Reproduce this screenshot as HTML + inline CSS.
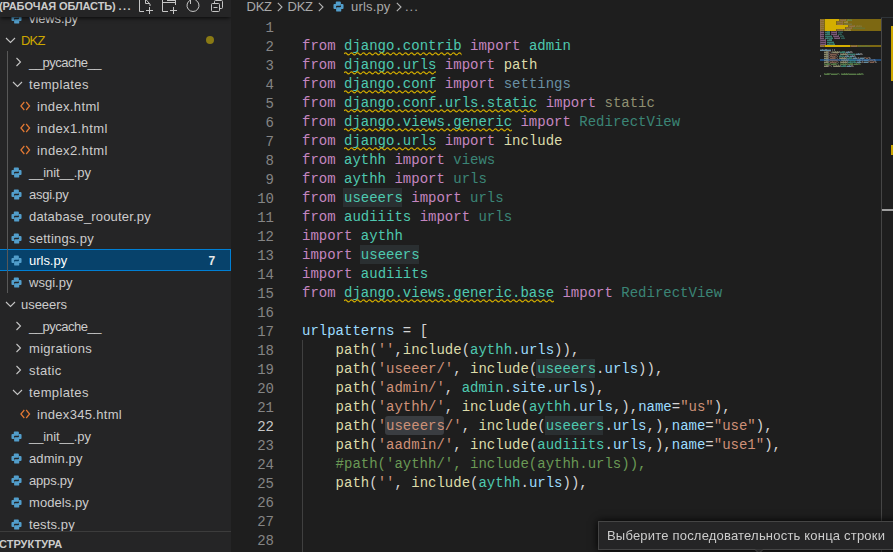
<!DOCTYPE html>
<html><head><meta charset="utf-8"><style>
*{margin:0;padding:0;box-sizing:border-box}
html,body{width:893px;height:552px;overflow:hidden;background:#1e1e1e}
body{position:relative;font-family:"Liberation Sans",sans-serif}
#sb{position:absolute;left:0;top:0;width:231px;height:552px;background:#252526;overflow:hidden}
.row{position:absolute;left:0;width:231px;height:22px;color:#cccccc;font-size:13px;letter-spacing:0.18px}
.row .t{position:absolute;top:1px;line-height:22px;white-space:nowrap}
.row .i{position:absolute;line-height:0}
.row.sel{left:-1px;width:232px;background:#07426b;border:1px solid #007fd4;color:#fff}
.row.sel .t{top:0px}
.row.sel .i{margin-top:-1px}
.badge{position:absolute;left:208.5px;top:0px;line-height:22px;font-weight:bold;font-size:12px;color:#e8e8e8}
.warn{color:#cca700}
.dot{position:absolute;left:206px;top:7px;width:8px;height:8px;border-radius:4px;background:#8a7a14}
#sbh{position:absolute;left:0;top:0;width:231px;height:17px;background:#252526;box-shadow:0 2px 4px -1px #000c;z-index:2}
#sbh .tt{position:absolute;left:-1px;top:-1px;font-weight:bold;font-size:11px;color:#cccccc;line-height:14px;white-space:nowrap}
.guide{position:absolute;width:1px;background:#585858}
#struct{position:absolute;left:0;top:531px;width:231px;height:21px;background:#252526;border-top:1px solid #3c3c3c;z-index:2}
#struct span{position:absolute;left:-1px;top:5px;font-weight:bold;font-size:11px;color:#cccccc;line-height:14px}
#bc{position:absolute;left:0;top:0;height:17px;width:893px;color:#a9a9a9;font-size:13px;letter-spacing:0.18px}
#bc span{position:absolute;top:-2px;line-height:17px;white-space:nowrap}
#bc svg{position:absolute}
.ln{position:absolute;left:240px;width:34px;text-align:right;font:14px/19px "Liberation Mono",monospace;color:#858585}
.ln.act{color:#c6c6c6}
.cl{position:absolute;left:302px;font:14px/19px "Liberation Mono",monospace;white-space:pre;color:#d4d4d4}
.hl{background:#2a2f31;box-shadow:0 -1px 0 #2a2f31, 0 1px 0 #2a2f31}
.hl2{background:#3a3d41;border-radius:3px;box-shadow:0 -1px 0 #3a3d41, 0 1px 0 #3a3d41}
#tip{position:absolute;left:598px;top:521px;width:300px;height:29px;background:#252526;border:1px solid #454545;color:#cccccc;font-size:13px;letter-spacing:0.2px;box-shadow:0 0 8px #000}
#tip span{will-change:transform;position:absolute;left:8px;top:5px;line-height:17px;white-space:nowrap}
#vs{position:absolute;left:881px;top:17px;width:1px;height:535px;background:#464646}
#vst{position:absolute;left:881px;top:17px;width:12px;height:1px;background:#2f3438}
</style></head><body>
<div id="sb">
<div class="guide" style="left:7px;top:51px;height:242px;z-index:1"></div>
<div class="row" style="top:7px"><span class="i" style="left:11px;top:6px"><svg width="11" height="11" viewBox="0 0 12 12"><path fill="#529ecb" d="M4 0.5H7.6Q8.6 0.5 8.6 1.5V4.3Q8.6 5.3 7.6 5.3H4.3Q3.3 5.3 3.3 6.3V8.6H1.5Q0.5 8.6 0.5 7.6V4.4Q0.5 3.4 1.5 3.4H3V1.5Q3 0.5 4 0.5Z"/><path fill="#529ecb" transform="rotate(180 6 6)" d="M4 0.5H7.6Q8.6 0.5 8.6 1.5V4.3Q8.6 5.3 7.6 5.3H4.3Q3.3 5.3 3.3 6.3V8.6H1.5Q0.5 8.6 0.5 7.6V4.4Q0.5 3.4 1.5 3.4H3V1.5Q3 0.5 4 0.5Z"/></svg></span><span class="t" style="left:29px;letter-spacing:-0.106px">views.py</span></div><div class="row" style="top:29px"><span class="i" style="left:5px;top:8px"><svg width="11" height="7" viewBox="0 0 11 7"><path d="M1 1l4.5 4.5L10 1" stroke="#c5c5c5" stroke-width="1.1" fill="none"/></svg></span><span class="t warn" style="left:21px;letter-spacing:-0.82px">DKZ</span><span class="dot"></span></div><div class="row" style="top:51px"><span class="i" style="left:15px;top:6px"><svg width="8" height="10" viewBox="0 0 8 10"><path d="M1.5 1l4 4-4 4" stroke="#c5c5c5" stroke-width="1.1" fill="none"/></svg></span><span class="t" style="left:29px;letter-spacing:-0.49px">__pycache__</span></div><div class="row" style="top:73px"><span class="i" style="left:12px;top:8px"><svg width="11" height="7" viewBox="0 0 11 7"><path d="M1 1l4.5 4.5L10 1" stroke="#c5c5c5" stroke-width="1.1" fill="none"/></svg></span><span class="t" style="left:29px;letter-spacing:0.392px">templates</span></div><div class="row" style="top:95px"><span class="i" style="left:20px;top:6px"><svg width="11" height="10" viewBox="0 0 11 10"><path d="M4.3 1L.9 5l3.4 4M6.2 1L9.6 5 6.2 9" stroke="#e37933" stroke-width="1.2" fill="none"/></svg></span><span class="t" style="left:37px;letter-spacing:0.358px">index.html</span></div><div class="row" style="top:117px"><span class="i" style="left:20px;top:6px"><svg width="11" height="10" viewBox="0 0 11 10"><path d="M4.3 1L.9 5l3.4 4M6.2 1L9.6 5 6.2 9" stroke="#e37933" stroke-width="1.2" fill="none"/></svg></span><span class="t" style="left:37px;letter-spacing:0.38px">index1.html</span></div><div class="row" style="top:139px"><span class="i" style="left:20px;top:6px"><svg width="11" height="10" viewBox="0 0 11 10"><path d="M4.3 1L.9 5l3.4 4M6.2 1L9.6 5 6.2 9" stroke="#e37933" stroke-width="1.2" fill="none"/></svg></span><span class="t" style="left:37px;letter-spacing:0.38px">index2.html</span></div><div class="row" style="top:161px"><span class="i" style="left:11px;top:6px"><svg width="11" height="11" viewBox="0 0 12 12"><path fill="#529ecb" d="M4 0.5H7.6Q8.6 0.5 8.6 1.5V4.3Q8.6 5.3 7.6 5.3H4.3Q3.3 5.3 3.3 6.3V8.6H1.5Q0.5 8.6 0.5 7.6V4.4Q0.5 3.4 1.5 3.4H3V1.5Q3 0.5 4 0.5Z"/><path fill="#529ecb" transform="rotate(180 6 6)" d="M4 0.5H7.6Q8.6 0.5 8.6 1.5V4.3Q8.6 5.3 7.6 5.3H4.3Q3.3 5.3 3.3 6.3V8.6H1.5Q0.5 8.6 0.5 7.6V4.4Q0.5 3.4 1.5 3.4H3V1.5Q3 0.5 4 0.5Z"/></svg></span><span class="t" style="left:29px;letter-spacing:-0.09px">__init__.py</span></div><div class="row" style="top:183px"><span class="i" style="left:11px;top:6px"><svg width="11" height="11" viewBox="0 0 12 12"><path fill="#529ecb" d="M4 0.5H7.6Q8.6 0.5 8.6 1.5V4.3Q8.6 5.3 7.6 5.3H4.3Q3.3 5.3 3.3 6.3V8.6H1.5Q0.5 8.6 0.5 7.6V4.4Q0.5 3.4 1.5 3.4H3V1.5Q3 0.5 4 0.5Z"/><path fill="#529ecb" transform="rotate(180 6 6)" d="M4 0.5H7.6Q8.6 0.5 8.6 1.5V4.3Q8.6 5.3 7.6 5.3H4.3Q3.3 5.3 3.3 6.3V8.6H1.5Q0.5 8.6 0.5 7.6V4.4Q0.5 3.4 1.5 3.4H3V1.5Q3 0.5 4 0.5Z"/></svg></span><span class="t" style="left:29px;letter-spacing:-0.253px">asgi.py</span></div><div class="row" style="top:205px"><span class="i" style="left:11px;top:6px"><svg width="11" height="11" viewBox="0 0 12 12"><path fill="#529ecb" d="M4 0.5H7.6Q8.6 0.5 8.6 1.5V4.3Q8.6 5.3 7.6 5.3H4.3Q3.3 5.3 3.3 6.3V8.6H1.5Q0.5 8.6 0.5 7.6V4.4Q0.5 3.4 1.5 3.4H3V1.5Q3 0.5 4 0.5Z"/><path fill="#529ecb" transform="rotate(180 6 6)" d="M4 0.5H7.6Q8.6 0.5 8.6 1.5V4.3Q8.6 5.3 7.6 5.3H4.3Q3.3 5.3 3.3 6.3V8.6H1.5Q0.5 8.6 0.5 7.6V4.4Q0.5 3.4 1.5 3.4H3V1.5Q3 0.5 4 0.5Z"/></svg></span><span class="t" style="left:29px;letter-spacing:0.174px">database_roouter.py</span></div><div class="row" style="top:227px"><span class="i" style="left:11px;top:6px"><svg width="11" height="11" viewBox="0 0 12 12"><path fill="#529ecb" d="M4 0.5H7.6Q8.6 0.5 8.6 1.5V4.3Q8.6 5.3 7.6 5.3H4.3Q3.3 5.3 3.3 6.3V8.6H1.5Q0.5 8.6 0.5 7.6V4.4Q0.5 3.4 1.5 3.4H3V1.5Q3 0.5 4 0.5Z"/><path fill="#529ecb" transform="rotate(180 6 6)" d="M4 0.5H7.6Q8.6 0.5 8.6 1.5V4.3Q8.6 5.3 7.6 5.3H4.3Q3.3 5.3 3.3 6.3V8.6H1.5Q0.5 8.6 0.5 7.6V4.4Q0.5 3.4 1.5 3.4H3V1.5Q3 0.5 4 0.5Z"/></svg></span><span class="t" style="left:29px;letter-spacing:0.25px">settings.py</span></div><div class="row sel" style="top:249px"><span class="i" style="left:11px;top:6px"><svg width="11" height="11" viewBox="0 0 12 12"><path fill="#529ecb" d="M4 0.5H7.6Q8.6 0.5 8.6 1.5V4.3Q8.6 5.3 7.6 5.3H4.3Q3.3 5.3 3.3 6.3V8.6H1.5Q0.5 8.6 0.5 7.6V4.4Q0.5 3.4 1.5 3.4H3V1.5Q3 0.5 4 0.5Z"/><path fill="#529ecb" transform="rotate(180 6 6)" d="M4 0.5H7.6Q8.6 0.5 8.6 1.5V4.3Q8.6 5.3 7.6 5.3H4.3Q3.3 5.3 3.3 6.3V8.6H1.5Q0.5 8.6 0.5 7.6V4.4Q0.5 3.4 1.5 3.4H3V1.5Q3 0.5 4 0.5Z"/></svg></span><span class="t" style="left:29px;letter-spacing:-0.02px">urls.py</span><span class="badge">7</span></div><div class="row" style="top:271px"><span class="i" style="left:11px;top:6px"><svg width="11" height="11" viewBox="0 0 12 12"><path fill="#529ecb" d="M4 0.5H7.6Q8.6 0.5 8.6 1.5V4.3Q8.6 5.3 7.6 5.3H4.3Q3.3 5.3 3.3 6.3V8.6H1.5Q0.5 8.6 0.5 7.6V4.4Q0.5 3.4 1.5 3.4H3V1.5Q3 0.5 4 0.5Z"/><path fill="#529ecb" transform="rotate(180 6 6)" d="M4 0.5H7.6Q8.6 0.5 8.6 1.5V4.3Q8.6 5.3 7.6 5.3H4.3Q3.3 5.3 3.3 6.3V8.6H1.5Q0.5 8.6 0.5 7.6V4.4Q0.5 3.4 1.5 3.4H3V1.5Q3 0.5 4 0.5Z"/></svg></span><span class="t" style="left:29px;letter-spacing:0.013px">wsgi.py</span></div><div class="row" style="top:293px"><span class="i" style="left:5px;top:8px"><svg width="11" height="7" viewBox="0 0 11 7"><path d="M1 1l4.5 4.5L10 1" stroke="#c5c5c5" stroke-width="1.1" fill="none"/></svg></span><span class="t" style="left:21px;letter-spacing:-0.037px">useeers</span></div><div class="row" style="top:315px"><span class="i" style="left:15px;top:6px"><svg width="8" height="10" viewBox="0 0 8 10"><path d="M1.5 1l4 4-4 4" stroke="#c5c5c5" stroke-width="1.1" fill="none"/></svg></span><span class="t" style="left:29px;letter-spacing:-0.49px">__pycache__</span></div><div class="row" style="top:337px"><span class="i" style="left:15px;top:6px"><svg width="8" height="10" viewBox="0 0 8 10"><path d="M1.5 1l4 4-4 4" stroke="#c5c5c5" stroke-width="1.1" fill="none"/></svg></span><span class="t" style="left:29px;letter-spacing:0.302px">migrations</span></div><div class="row" style="top:359px"><span class="i" style="left:15px;top:6px"><svg width="8" height="10" viewBox="0 0 8 10"><path d="M1.5 1l4 4-4 4" stroke="#c5c5c5" stroke-width="1.1" fill="none"/></svg></span><span class="t" style="left:29px;letter-spacing:0.4px">static</span></div><div class="row" style="top:381px"><span class="i" style="left:12px;top:8px"><svg width="11" height="7" viewBox="0 0 11 7"><path d="M1 1l4.5 4.5L10 1" stroke="#c5c5c5" stroke-width="1.1" fill="none"/></svg></span><span class="t" style="left:29px;letter-spacing:0.392px">templates</span></div><div class="row" style="top:403px"><span class="i" style="left:20px;top:6px"><svg width="11" height="10" viewBox="0 0 11 10"><path d="M4.3 1L.9 5l3.4 4M6.2 1L9.6 5 6.2 9" stroke="#e37933" stroke-width="1.2" fill="none"/></svg></span><span class="t" style="left:37px;letter-spacing:0.313px">index345.html</span></div><div class="row" style="top:425px"><span class="i" style="left:11px;top:6px"><svg width="11" height="11" viewBox="0 0 12 12"><path fill="#529ecb" d="M4 0.5H7.6Q8.6 0.5 8.6 1.5V4.3Q8.6 5.3 7.6 5.3H4.3Q3.3 5.3 3.3 6.3V8.6H1.5Q0.5 8.6 0.5 7.6V4.4Q0.5 3.4 1.5 3.4H3V1.5Q3 0.5 4 0.5Z"/><path fill="#529ecb" transform="rotate(180 6 6)" d="M4 0.5H7.6Q8.6 0.5 8.6 1.5V4.3Q8.6 5.3 7.6 5.3H4.3Q3.3 5.3 3.3 6.3V8.6H1.5Q0.5 8.6 0.5 7.6V4.4Q0.5 3.4 1.5 3.4H3V1.5Q3 0.5 4 0.5Z"/></svg></span><span class="t" style="left:29px;letter-spacing:-0.09px">__init__.py</span></div><div class="row" style="top:447px"><span class="i" style="left:11px;top:6px"><svg width="11" height="11" viewBox="0 0 12 12"><path fill="#529ecb" d="M4 0.5H7.6Q8.6 0.5 8.6 1.5V4.3Q8.6 5.3 7.6 5.3H4.3Q3.3 5.3 3.3 6.3V8.6H1.5Q0.5 8.6 0.5 7.6V4.4Q0.5 3.4 1.5 3.4H3V1.5Q3 0.5 4 0.5Z"/><path fill="#529ecb" transform="rotate(180 6 6)" d="M4 0.5H7.6Q8.6 0.5 8.6 1.5V4.3Q8.6 5.3 7.6 5.3H4.3Q3.3 5.3 3.3 6.3V8.6H1.5Q0.5 8.6 0.5 7.6V4.4Q0.5 3.4 1.5 3.4H3V1.5Q3 0.5 4 0.5Z"/></svg></span><span class="t" style="left:29px;letter-spacing:0.094px">admin.py</span></div><div class="row" style="top:469px"><span class="i" style="left:11px;top:6px"><svg width="11" height="11" viewBox="0 0 12 12"><path fill="#529ecb" d="M4 0.5H7.6Q8.6 0.5 8.6 1.5V4.3Q8.6 5.3 7.6 5.3H4.3Q3.3 5.3 3.3 6.3V8.6H1.5Q0.5 8.6 0.5 7.6V4.4Q0.5 3.4 1.5 3.4H3V1.5Q3 0.5 4 0.5Z"/><path fill="#529ecb" transform="rotate(180 6 6)" d="M4 0.5H7.6Q8.6 0.5 8.6 1.5V4.3Q8.6 5.3 7.6 5.3H4.3Q3.3 5.3 3.3 6.3V8.6H1.5Q0.5 8.6 0.5 7.6V4.4Q0.5 3.4 1.5 3.4H3V1.5Q3 0.5 4 0.5Z"/></svg></span><span class="t" style="left:29px;letter-spacing:-0.187px">apps.py</span></div><div class="row" style="top:491px"><span class="i" style="left:11px;top:6px"><svg width="11" height="11" viewBox="0 0 12 12"><path fill="#529ecb" d="M4 0.5H7.6Q8.6 0.5 8.6 1.5V4.3Q8.6 5.3 7.6 5.3H4.3Q3.3 5.3 3.3 6.3V8.6H1.5Q0.5 8.6 0.5 7.6V4.4Q0.5 3.4 1.5 3.4H3V1.5Q3 0.5 4 0.5Z"/><path fill="#529ecb" transform="rotate(180 6 6)" d="M4 0.5H7.6Q8.6 0.5 8.6 1.5V4.3Q8.6 5.3 7.6 5.3H4.3Q3.3 5.3 3.3 6.3V8.6H1.5Q0.5 8.6 0.5 7.6V4.4Q0.5 3.4 1.5 3.4H3V1.5Q3 0.5 4 0.5Z"/></svg></span><span class="t" style="left:29px;letter-spacing:0.055px">models.py</span></div><div class="row" style="top:513px"><span class="i" style="left:11px;top:6px"><svg width="11" height="11" viewBox="0 0 12 12"><path fill="#529ecb" d="M4 0.5H7.6Q8.6 0.5 8.6 1.5V4.3Q8.6 5.3 7.6 5.3H4.3Q3.3 5.3 3.3 6.3V8.6H1.5Q0.5 8.6 0.5 7.6V4.4Q0.5 3.4 1.5 3.4H3V1.5Q3 0.5 4 0.5Z"/><path fill="#529ecb" transform="rotate(180 6 6)" d="M4 0.5H7.6Q8.6 0.5 8.6 1.5V4.3Q8.6 5.3 7.6 5.3H4.3Q3.3 5.3 3.3 6.3V8.6H1.5Q0.5 8.6 0.5 7.6V4.4Q0.5 3.4 1.5 3.4H3V1.5Q3 0.5 4 0.5Z"/></svg></span><span class="t" style="left:29px;letter-spacing:0.123px">tests.py</span></div>
<div id="sbh"><span class="tt" style="letter-spacing:-0.12px">(РАБОЧАЯ ОБЛАСТЬ)</span><span class="tt" style="left:118.5px;letter-spacing:1.5px">...</span><svg style="position:absolute;left:0;top:0" width="231" height="16" fill="none" stroke="#c5c5c5" stroke-width="1">
<path d="M139.5 -1V11.5H144M145.5 -1V3.5H149M145.8 -0.5L150 4V6M149.5 7V14M146 10.5H153"/>
<path d="M162.5 -1V11.5H168M162.5 2.5H175.5M167 0.5H175M175.5 -1V5M173.5 7V14M170 10.5H177"/>
<path d="M190.6 0A6 6 0 1 0 195.4 0M190.5 -1V4"/>
<path d="M212.5 3.5H218.5Q219.5 3.5 219.5 4.5V10.5Q219.5 11.5 218.5 11.5H212.5Q211.5 11.5 211.5 10.5V4.5Q211.5 3.5 212.5 3.5ZM214.5 3.5V1.5Q214.5 0.5 215.5 0.5H221.5Q222.5 0.5 222.5 1.5V7.5Q222.5 8.5 221.5 8.5H219.5M213.5 7.5H217.5"/>
</svg></div>
<div id="struct"><span>СТРУКТУРА</span></div>
</div>
<div id="bc"><span style="left:246.5px;letter-spacing:-0.25px">DKZ</span><svg style="left:277px;top:2px" width="6" height="10"><path d="M.8 .8l4.2 4.2-4.2 4.2" stroke="#b4b4b4" stroke-width="1.1" fill="none"/></svg><span style="left:287.5px;letter-spacing:-0.25px">DKZ</span><svg style="left:318px;top:2px" width="6" height="10"><path d="M.8 .8l4.2 4.2-4.2 4.2" stroke="#b4b4b4" stroke-width="1.1" fill="none"/></svg><span style="left:333px;top:1px;line-height:0"><svg width="11" height="11" viewBox="0 0 12 12"><path fill="#529ecb" d="M4 0.5H7.6Q8.6 0.5 8.6 1.5V4.3Q8.6 5.3 7.6 5.3H4.3Q3.3 5.3 3.3 6.3V8.6H1.5Q0.5 8.6 0.5 7.6V4.4Q0.5 3.4 1.5 3.4H3V1.5Q3 0.5 4 0.5Z"/><path fill="#529ecb" transform="rotate(180 6 6)" d="M4 0.5H7.6Q8.6 0.5 8.6 1.5V4.3Q8.6 5.3 7.6 5.3H4.3Q3.3 5.3 3.3 6.3V8.6H1.5Q0.5 8.6 0.5 7.6V4.4Q0.5 3.4 1.5 3.4H3V1.5Q3 0.5 4 0.5Z"/></svg></span><span style="left:351px">urls.py</span><svg style="left:396px;top:2px" width="6" height="10"><path d="M.8 .8l4.2 4.2-4.2 4.2" stroke="#b4b4b4" stroke-width="1.1" fill="none"/></svg><span style="left:405px;letter-spacing:1px">...</span></div>
<div class="guide" style="left:302px;top:340px;height:212px;background:#404040"></div>
<div style="position:absolute;left:343.0px;top:188px;width:58.8px;height:19px;background:#2a2f31"></div><div style="position:absolute;left:359.8px;top:245px;width:58.8px;height:19px;background:#2a2f31"></div><div style="position:absolute;left:536.2px;top:359px;width:58.8px;height:19px;background:#2a2f31"></div><div style="position:absolute;left:385.4px;top:416px;width:58.8px;height:18.5px;background:#3a3d41;border-radius:3px"></div><div style="position:absolute;left:544.6px;top:416px;width:58.8px;height:19px;background:#2a2f31"></div>
<div class="ln" style="top:19px">1</div><div class="ln" style="top:38px">2</div><div class="cl" style="top:37px"><span style="color:#c586c0">from</span> <span style="color:#4ec9b0">django.contrib</span> <span style="color:#c586c0">import</span> <span style="color:#4ec9b0">admin</span></div><div class="ln" style="top:57px">3</div><div class="cl" style="top:56px"><span style="color:#c586c0">from</span> <span style="color:#4ec9b0">django.urls</span> <span style="color:#c586c0">import</span> <span style="color:#dcdcaa">path</span></div><div class="ln" style="top:76px">4</div><div class="cl" style="top:75px"><span style="color:#c586c0">from</span> <span style="color:#4ec9b0">django.conf</span> <span style="color:#c586c0">import</span> <span style="color:#6990a4">settings</span></div><div class="ln" style="top:95px">5</div><div class="cl" style="top:94px"><span style="color:#c586c0">from</span> <span style="color:#4ec9b0">django.conf.urls.static</span> <span style="color:#c586c0">import</span> <span style="color:#909072">static</span></div><div class="ln" style="top:114px">6</div><div class="cl" style="top:113px"><span style="color:#c586c0">from</span> <span style="color:#4ec9b0">django.views.generic</span> <span style="color:#c586c0">import</span> <span style="color:#3b8576">RedirectView</span></div><div class="ln" style="top:133px">7</div><div class="cl" style="top:132px"><span style="color:#c586c0">from</span> <span style="color:#4ec9b0">django.urls</span> <span style="color:#c586c0">import</span> <span style="color:#dcdcaa">include</span></div><div class="ln" style="top:152px">8</div><div class="cl" style="top:151px"><span style="color:#c586c0">from</span> <span style="color:#4ec9b0">aythh</span> <span style="color:#c586c0">import</span> <span style="color:#3b8576">views</span></div><div class="ln" style="top:171px">9</div><div class="cl" style="top:170px"><span style="color:#c586c0">from</span> <span style="color:#4ec9b0">aythh</span> <span style="color:#c586c0">import</span> <span style="color:#3b8576">urls</span></div><div class="ln" style="top:190px">10</div><div class="cl" style="top:189px"><span style="color:#c586c0">from</span> <span style="color:#4ec9b0">useeers</span> <span style="color:#c586c0">import</span> <span style="color:#3b8576">urls</span></div><div class="ln" style="top:209px">11</div><div class="cl" style="top:208px"><span style="color:#c586c0">from</span> <span style="color:#4ec9b0">audiiits</span> <span style="color:#c586c0">import</span> <span style="color:#3b8576">urls</span></div><div class="ln" style="top:228px">12</div><div class="cl" style="top:227px"><span style="color:#c586c0">import</span> <span style="color:#4ec9b0">aythh</span></div><div class="ln" style="top:247px">13</div><div class="cl" style="top:246px"><span style="color:#c586c0">import</span> <span style="color:#4ec9b0">useeers</span></div><div class="ln" style="top:266px">14</div><div class="cl" style="top:265px"><span style="color:#c586c0">import</span> <span style="color:#4ec9b0">audiiits</span></div><div class="ln" style="top:285px">15</div><div class="cl" style="top:284px"><span style="color:#c586c0">from</span> <span style="color:#4ec9b0">django.views.generic.base</span> <span style="color:#c586c0">import</span> <span style="color:#3b8576">RedirectView</span></div><div class="ln" style="top:304px">16</div><div class="ln" style="top:323px">17</div><div class="cl" style="top:322px"><span style="color:#9cdcfe">urlpatterns</span><span style="color:#d4d4d4"> = [</span></div><div class="ln" style="top:342px">18</div><div class="cl" style="top:341px">    <span style="color:#dcdcaa">path</span><span style="color:#d4d4d4">(</span><span style="color:#ce9178">&#x27;&#x27;</span><span style="color:#d4d4d4">,</span><span style="color:#dcdcaa">include</span><span style="color:#d4d4d4">(</span><span style="color:#4ec9b0">aythh</span><span style="color:#d4d4d4">.</span><span style="color:#9cdcfe">urls</span><span style="color:#d4d4d4">)),</span></div><div class="ln" style="top:361px">19</div><div class="cl" style="top:360px">    <span style="color:#dcdcaa">path</span><span style="color:#d4d4d4">(</span><span style="color:#ce9178">&#x27;useeer/&#x27;</span><span style="color:#d4d4d4">, </span><span style="color:#dcdcaa">include</span><span style="color:#d4d4d4">(</span><span style="color:#4ec9b0">useeers</span><span style="color:#d4d4d4">.</span><span style="color:#9cdcfe">urls</span><span style="color:#d4d4d4">)),</span></div><div class="ln" style="top:380px">20</div><div class="cl" style="top:379px">    <span style="color:#dcdcaa">path</span><span style="color:#d4d4d4">(</span><span style="color:#ce9178">&#x27;admin/&#x27;</span><span style="color:#d4d4d4">, </span><span style="color:#4ec9b0">admin</span><span style="color:#d4d4d4">.</span><span style="color:#9cdcfe">site</span><span style="color:#d4d4d4">.</span><span style="color:#9cdcfe">urls</span><span style="color:#d4d4d4">),</span></div><div class="ln" style="top:399px">21</div><div class="cl" style="top:398px">    <span style="color:#dcdcaa">path</span><span style="color:#d4d4d4">(</span><span style="color:#ce9178">&#x27;aythh/&#x27;</span><span style="color:#d4d4d4">, </span><span style="color:#dcdcaa">include</span><span style="color:#d4d4d4">(</span><span style="color:#4ec9b0">aythh</span><span style="color:#d4d4d4">.</span><span style="color:#9cdcfe">urls</span><span style="color:#d4d4d4">,),</span><span style="color:#9cdcfe">name</span><span style="color:#d4d4d4">=</span><span style="color:#ce9178">&quot;us&quot;</span><span style="color:#d4d4d4">),</span></div><div class="ln act" style="top:418px">22</div><div class="cl" style="top:417px">    <span style="color:#dcdcaa">path</span><span style="color:#d4d4d4">(</span><span style="color:#ce9178">&#x27;</span><span style="color:#ce9178">useeers</span><span style="color:#ce9178">/&#x27;</span><span style="color:#d4d4d4">, </span><span style="color:#dcdcaa">include</span><span style="color:#d4d4d4">(</span><span style="color:#4ec9b0">useeers</span><span style="color:#d4d4d4">.</span><span style="color:#9cdcfe">urls</span><span style="color:#d4d4d4">,),</span><span style="color:#9cdcfe">name</span><span style="color:#d4d4d4">=</span><span style="color:#ce9178">&quot;use&quot;</span><span style="color:#d4d4d4">),</span></div><div class="ln" style="top:437px">23</div><div class="cl" style="top:436px">    <span style="color:#dcdcaa">path</span><span style="color:#d4d4d4">(</span><span style="color:#ce9178">&#x27;aadmin/&#x27;</span><span style="color:#d4d4d4">, </span><span style="color:#dcdcaa">include</span><span style="color:#d4d4d4">(</span><span style="color:#4ec9b0">audiiits</span><span style="color:#d4d4d4">.</span><span style="color:#9cdcfe">urls</span><span style="color:#d4d4d4">,),</span><span style="color:#9cdcfe">name</span><span style="color:#d4d4d4">=</span><span style="color:#ce9178">&quot;use1&quot;</span><span style="color:#d4d4d4">),</span></div><div class="ln" style="top:456px">24</div><div class="cl" style="top:455px">    <span style="color:#6a9955">#path(&#x27;aythh/&#x27;, include(aythh.urls)),</span></div><div class="ln" style="top:475px">25</div><div class="cl" style="top:474px">    <span style="color:#dcdcaa">path</span><span style="color:#d4d4d4">(</span><span style="color:#ce9178">&#x27;&#x27;</span><span style="color:#d4d4d4">, </span><span style="color:#dcdcaa">include</span><span style="color:#d4d4d4">(</span><span style="color:#4ec9b0">aythh</span><span style="color:#d4d4d4">.</span><span style="color:#9cdcfe">urls</span><span style="color:#d4d4d4">)),</span></div><div class="ln" style="top:494px">26</div><div class="ln" style="top:513px">27</div><div class="ln" style="top:532px">28</div>
<svg style="position:absolute;left:344.0px;top:52px" width="117.6" height="4"><defs><pattern id="wv0" width="6" height="4" patternUnits="userSpaceOnUse"><path d="M0 1.8Q1.5 -0.2 3 1.8T6 1.8" stroke="#cca700" stroke-width="1.2" fill="none"/></pattern></defs><rect width="100%" height="4" fill="url(#wv0)"/></svg><svg style="position:absolute;left:344.0px;top:71px" width="92.4" height="4"><defs><pattern id="wv1" width="6" height="4" patternUnits="userSpaceOnUse"><path d="M0 1.8Q1.5 -0.2 3 1.8T6 1.8" stroke="#cca700" stroke-width="1.2" fill="none"/></pattern></defs><rect width="100%" height="4" fill="url(#wv1)"/></svg><svg style="position:absolute;left:344.0px;top:90px" width="92.4" height="4"><defs><pattern id="wv2" width="6" height="4" patternUnits="userSpaceOnUse"><path d="M0 1.8Q1.5 -0.2 3 1.8T6 1.8" stroke="#cca700" stroke-width="1.2" fill="none"/></pattern></defs><rect width="100%" height="4" fill="url(#wv2)"/></svg><svg style="position:absolute;left:344.0px;top:109px" width="193.2" height="4"><defs><pattern id="wv3" width="6" height="4" patternUnits="userSpaceOnUse"><path d="M0 1.8Q1.5 -0.2 3 1.8T6 1.8" stroke="#cca700" stroke-width="1.2" fill="none"/></pattern></defs><rect width="100%" height="4" fill="url(#wv3)"/></svg><svg style="position:absolute;left:344.0px;top:128px" width="168.0" height="4"><defs><pattern id="wv4" width="6" height="4" patternUnits="userSpaceOnUse"><path d="M0 1.8Q1.5 -0.2 3 1.8T6 1.8" stroke="#cca700" stroke-width="1.2" fill="none"/></pattern></defs><rect width="100%" height="4" fill="url(#wv4)"/></svg><svg style="position:absolute;left:344.0px;top:147px" width="92.4" height="4"><defs><pattern id="wv5" width="6" height="4" patternUnits="userSpaceOnUse"><path d="M0 1.8Q1.5 -0.2 3 1.8T6 1.8" stroke="#cca700" stroke-width="1.2" fill="none"/></pattern></defs><rect width="100%" height="4" fill="url(#wv5)"/></svg><svg style="position:absolute;left:344.0px;top:299px" width="210.0" height="4"><defs><pattern id="wv6" width="6" height="4" patternUnits="userSpaceOnUse"><path d="M0 1.8Q1.5 -0.2 3 1.8T6 1.8" stroke="#cca700" stroke-width="1.2" fill="none"/></pattern></defs><rect width="100%" height="4" fill="url(#wv6)"/></svg>
<div style="position:absolute;left:820px;top:19px;width:61px;height:2px;background:#7d6812"></div><div style="position:absolute;left:825px;top:19px;width:14px;height:2px;background:#d4ae00"></div><div style="position:absolute;left:820px;top:21px;width:61px;height:2px;background:#7d6812"></div><div style="position:absolute;left:825px;top:21px;width:11px;height:2px;background:#d4ae00"></div><div style="position:absolute;left:820px;top:23px;width:61px;height:2px;background:#7d6812"></div><div style="position:absolute;left:825px;top:23px;width:11px;height:2px;background:#d4ae00"></div><div style="position:absolute;left:820px;top:25px;width:61px;height:2px;background:#7d6812"></div><div style="position:absolute;left:825px;top:25px;width:23px;height:2px;background:#d4ae00"></div><div style="position:absolute;left:820px;top:27px;width:61px;height:2px;background:#7d6812"></div><div style="position:absolute;left:825px;top:27px;width:20px;height:2px;background:#d4ae00"></div><div style="position:absolute;left:820px;top:29px;width:61px;height:2px;background:#7d6812"></div><div style="position:absolute;left:825px;top:29px;width:11px;height:2px;background:#d4ae00"></div><div style="position:absolute;left:820px;top:45px;width:61px;height:2px;background:#7d6812"></div><div style="position:absolute;left:825px;top:45px;width:25px;height:2px;background:#d4ae00"></div><div style="position:absolute;left:820px;top:59px;width:61px;height:2px;background:#1f4a78"></div><div style="position:absolute;left:830px;top:59px;width:7px;height:2px;background:#2c5c8e;z-index:1"></div><svg style="position:absolute;left:0;top:0;z-index:2" width="893" height="100" shape-rendering="crispEdges"><rect x="820" y="19" width="1" height="1" fill="#8e6f3c"/><rect x="820" y="20" width="1" height="1" fill="#937146"/><rect x="821" y="19" width="1" height="1" fill="#866c27"/><rect x="821" y="20" width="1" height="1" fill="#937146"/><rect x="822" y="19" width="1" height="1" fill="#866c27"/><rect x="822" y="20" width="1" height="1" fill="#937146"/><rect x="823" y="19" width="1" height="1" fill="#866c27"/><rect x="823" y="20" width="1" height="1" fill="#937146"/><rect x="840" y="19" width="1" height="1" fill="#896d2e"/><rect x="840" y="20" width="1" height="1" fill="#8e6f3c"/><rect x="841" y="19" width="1" height="1" fill="#866c27"/><rect x="841" y="20" width="1" height="1" fill="#937146"/><rect x="842" y="19" width="1" height="1" fill="#866c27"/><rect x="842" y="20" width="1" height="1" fill="#937146"/><rect x="843" y="19" width="1" height="1" fill="#866c27"/><rect x="843" y="20" width="1" height="1" fill="#937146"/><rect x="844" y="19" width="1" height="1" fill="#866c27"/><rect x="844" y="20" width="1" height="1" fill="#937146"/><rect x="845" y="19" width="1" height="1" fill="#8e6f3c"/><rect x="845" y="20" width="1" height="1" fill="#937146"/><rect x="847" y="19" width="1" height="1" fill="#777425"/><rect x="847" y="20" width="1" height="1" fill="#6f8541"/><rect x="848" y="19" width="1" height="1" fill="#727f38"/><rect x="848" y="20" width="1" height="1" fill="#6f8541"/><rect x="849" y="19" width="1" height="1" fill="#777425"/><rect x="849" y="20" width="1" height="1" fill="#6f8541"/><rect x="850" y="19" width="1" height="1" fill="#75782b"/><rect x="850" y="20" width="1" height="1" fill="#727f38"/><rect x="851" y="19" width="1" height="1" fill="#777425"/><rect x="851" y="20" width="1" height="1" fill="#6f8541"/><rect x="820" y="21" width="1" height="1" fill="#8e6f3c"/><rect x="820" y="22" width="1" height="1" fill="#937146"/><rect x="821" y="21" width="1" height="1" fill="#866c27"/><rect x="821" y="22" width="1" height="1" fill="#937146"/><rect x="822" y="21" width="1" height="1" fill="#866c27"/><rect x="822" y="22" width="1" height="1" fill="#937146"/><rect x="823" y="21" width="1" height="1" fill="#866c27"/><rect x="823" y="22" width="1" height="1" fill="#937146"/><rect x="837" y="21" width="1" height="1" fill="#896d2e"/><rect x="837" y="22" width="1" height="1" fill="#8e6f3c"/><rect x="838" y="21" width="1" height="1" fill="#866c27"/><rect x="838" y="22" width="1" height="1" fill="#937146"/><rect x="839" y="21" width="1" height="1" fill="#866c27"/><rect x="839" y="22" width="1" height="1" fill="#937146"/><rect x="840" y="21" width="1" height="1" fill="#866c27"/><rect x="840" y="22" width="1" height="1" fill="#937146"/><rect x="841" y="21" width="1" height="1" fill="#866c27"/><rect x="841" y="22" width="1" height="1" fill="#937146"/><rect x="842" y="21" width="1" height="1" fill="#8e6f3c"/><rect x="842" y="22" width="1" height="1" fill="#937146"/><rect x="844" y="21" width="1" height="1" fill="#887624"/><rect x="844" y="22" width="1" height="1" fill="#9a8b40"/><rect x="845" y="21" width="1" height="1" fill="#887624"/><rect x="845" y="22" width="1" height="1" fill="#9a8b40"/><rect x="846" y="21" width="1" height="1" fill="#948436"/><rect x="846" y="22" width="1" height="1" fill="#9a8b40"/><rect x="847" y="21" width="1" height="1" fill="#948436"/><rect x="847" y="22" width="1" height="1" fill="#9a8b40"/><rect x="820" y="23" width="1" height="1" fill="#8e6f3c"/><rect x="820" y="24" width="1" height="1" fill="#937146"/><rect x="821" y="23" width="1" height="1" fill="#866c27"/><rect x="821" y="24" width="1" height="1" fill="#937146"/><rect x="822" y="23" width="1" height="1" fill="#866c27"/><rect x="822" y="24" width="1" height="1" fill="#937146"/><rect x="823" y="23" width="1" height="1" fill="#866c27"/><rect x="823" y="24" width="1" height="1" fill="#937146"/><rect x="837" y="23" width="1" height="1" fill="#896d2e"/><rect x="837" y="24" width="1" height="1" fill="#8e6f3c"/><rect x="838" y="23" width="1" height="1" fill="#866c27"/><rect x="838" y="24" width="1" height="1" fill="#937146"/><rect x="839" y="23" width="1" height="1" fill="#866c27"/><rect x="839" y="24" width="1" height="1" fill="#937146"/><rect x="840" y="23" width="1" height="1" fill="#866c27"/><rect x="840" y="24" width="1" height="1" fill="#937146"/><rect x="841" y="23" width="1" height="1" fill="#866c27"/><rect x="841" y="24" width="1" height="1" fill="#937146"/><rect x="842" y="23" width="1" height="1" fill="#8e6f3c"/><rect x="842" y="24" width="1" height="1" fill="#937146"/><rect x="844" y="23" width="1" height="1" fill="#7b6d24"/><rect x="844" y="24" width="1" height="1" fill="#77743e"/><rect x="845" y="23" width="1" height="1" fill="#7b6d24"/><rect x="845" y="24" width="1" height="1" fill="#77743e"/><rect x="846" y="23" width="1" height="1" fill="#787235"/><rect x="846" y="24" width="1" height="1" fill="#77743e"/><rect x="847" y="23" width="1" height="1" fill="#787235"/><rect x="847" y="24" width="1" height="1" fill="#77743e"/><rect x="848" y="23" width="1" height="1" fill="#7a6e29"/><rect x="848" y="24" width="1" height="1" fill="#787235"/><rect x="849" y="23" width="1" height="1" fill="#7b6d24"/><rect x="849" y="24" width="1" height="1" fill="#77743e"/><rect x="850" y="23" width="1" height="1" fill="#7b6d24"/><rect x="850" y="24" width="1" height="1" fill="#77743e"/><rect x="851" y="23" width="1" height="1" fill="#7b6d24"/><rect x="851" y="24" width="1" height="1" fill="#77743e"/><rect x="820" y="25" width="1" height="1" fill="#8e6f3c"/><rect x="820" y="26" width="1" height="1" fill="#937146"/><rect x="821" y="25" width="1" height="1" fill="#866c27"/><rect x="821" y="26" width="1" height="1" fill="#937146"/><rect x="822" y="25" width="1" height="1" fill="#866c27"/><rect x="822" y="26" width="1" height="1" fill="#937146"/><rect x="823" y="25" width="1" height="1" fill="#866c27"/><rect x="823" y="26" width="1" height="1" fill="#937146"/><rect x="849" y="25" width="1" height="1" fill="#896d2e"/><rect x="849" y="26" width="1" height="1" fill="#8e6f3c"/><rect x="850" y="25" width="1" height="1" fill="#866c27"/><rect x="850" y="26" width="1" height="1" fill="#937146"/><rect x="851" y="25" width="1" height="1" fill="#866c27"/><rect x="851" y="26" width="1" height="1" fill="#937146"/><rect x="852" y="25" width="1" height="1" fill="#866c27"/><rect x="852" y="26" width="1" height="1" fill="#937146"/><rect x="853" y="25" width="1" height="1" fill="#866c27"/><rect x="853" y="26" width="1" height="1" fill="#937146"/><rect x="854" y="25" width="1" height="1" fill="#8e6f3c"/><rect x="854" y="26" width="1" height="1" fill="#937146"/><rect x="856" y="25" width="1" height="1" fill="#7f6d1e"/><rect x="856" y="26" width="1" height="1" fill="#83742f"/><rect x="857" y="25" width="1" height="1" fill="#827229"/><rect x="857" y="26" width="1" height="1" fill="#83742f"/><rect x="858" y="25" width="1" height="1" fill="#7f6d1e"/><rect x="858" y="26" width="1" height="1" fill="#83742f"/><rect x="859" y="25" width="1" height="1" fill="#827229"/><rect x="859" y="26" width="1" height="1" fill="#83742f"/><rect x="860" y="25" width="1" height="1" fill="#806e21"/><rect x="860" y="26" width="1" height="1" fill="#827229"/><rect x="861" y="25" width="1" height="1" fill="#7f6d1e"/><rect x="861" y="26" width="1" height="1" fill="#83742f"/><rect x="820" y="27" width="1" height="1" fill="#8e6f3c"/><rect x="820" y="28" width="1" height="1" fill="#937146"/><rect x="821" y="27" width="1" height="1" fill="#866c27"/><rect x="821" y="28" width="1" height="1" fill="#937146"/><rect x="822" y="27" width="1" height="1" fill="#866c27"/><rect x="822" y="28" width="1" height="1" fill="#937146"/><rect x="823" y="27" width="1" height="1" fill="#866c27"/><rect x="823" y="28" width="1" height="1" fill="#937146"/><rect x="846" y="27" width="1" height="1" fill="#896d2e"/><rect x="846" y="28" width="1" height="1" fill="#8e6f3c"/><rect x="847" y="27" width="1" height="1" fill="#866c27"/><rect x="847" y="28" width="1" height="1" fill="#937146"/><rect x="848" y="27" width="1" height="1" fill="#866c27"/><rect x="848" y="28" width="1" height="1" fill="#937146"/><rect x="849" y="27" width="1" height="1" fill="#866c27"/><rect x="849" y="28" width="1" height="1" fill="#937146"/><rect x="850" y="27" width="1" height="1" fill="#866c27"/><rect x="850" y="28" width="1" height="1" fill="#937146"/><rect x="851" y="27" width="1" height="1" fill="#8e6f3c"/><rect x="851" y="28" width="1" height="1" fill="#937146"/><rect x="853" y="27" width="1" height="1" fill="#6d6f2a"/><rect x="853" y="28" width="1" height="1" fill="#697130"/><rect x="854" y="27" width="1" height="1" fill="#756b1e"/><rect x="854" y="28" width="1" height="1" fill="#697130"/><rect x="855" y="27" width="1" height="1" fill="#6d6f2a"/><rect x="855" y="28" width="1" height="1" fill="#697130"/><rect x="856" y="27" width="1" height="1" fill="#726d22"/><rect x="856" y="28" width="1" height="1" fill="#6d6f2a"/><rect x="857" y="27" width="1" height="1" fill="#756b1e"/><rect x="857" y="28" width="1" height="1" fill="#697130"/><rect x="858" y="27" width="1" height="1" fill="#756b1e"/><rect x="858" y="28" width="1" height="1" fill="#697130"/><rect x="859" y="27" width="1" height="1" fill="#756b1e"/><rect x="859" y="28" width="1" height="1" fill="#697130"/><rect x="860" y="27" width="1" height="1" fill="#6d6f2a"/><rect x="860" y="28" width="1" height="1" fill="#697130"/><rect x="861" y="27" width="1" height="1" fill="#6d6f2a"/><rect x="861" y="28" width="1" height="1" fill="#697130"/><rect x="862" y="27" width="1" height="1" fill="#726d22"/><rect x="862" y="28" width="1" height="1" fill="#6d6f2a"/><rect x="863" y="27" width="1" height="1" fill="#756b1e"/><rect x="863" y="28" width="1" height="1" fill="#697130"/><rect x="864" y="27" width="1" height="1" fill="#756b1e"/><rect x="864" y="28" width="1" height="1" fill="#697130"/><rect x="820" y="29" width="1" height="1" fill="#8e6f3c"/><rect x="820" y="30" width="1" height="1" fill="#937146"/><rect x="821" y="29" width="1" height="1" fill="#866c27"/><rect x="821" y="30" width="1" height="1" fill="#937146"/><rect x="822" y="29" width="1" height="1" fill="#866c27"/><rect x="822" y="30" width="1" height="1" fill="#937146"/><rect x="823" y="29" width="1" height="1" fill="#866c27"/><rect x="823" y="30" width="1" height="1" fill="#937146"/><rect x="837" y="29" width="1" height="1" fill="#896d2e"/><rect x="837" y="30" width="1" height="1" fill="#8e6f3c"/><rect x="838" y="29" width="1" height="1" fill="#866c27"/><rect x="838" y="30" width="1" height="1" fill="#937146"/><rect x="839" y="29" width="1" height="1" fill="#866c27"/><rect x="839" y="30" width="1" height="1" fill="#937146"/><rect x="840" y="29" width="1" height="1" fill="#866c27"/><rect x="840" y="30" width="1" height="1" fill="#937146"/><rect x="841" y="29" width="1" height="1" fill="#866c27"/><rect x="841" y="30" width="1" height="1" fill="#937146"/><rect x="842" y="29" width="1" height="1" fill="#8e6f3c"/><rect x="842" y="30" width="1" height="1" fill="#937146"/><rect x="844" y="29" width="1" height="1" fill="#8c7b2a"/><rect x="844" y="30" width="1" height="1" fill="#948436"/><rect x="845" y="29" width="1" height="1" fill="#887624"/><rect x="845" y="30" width="1" height="1" fill="#9a8b40"/><rect x="846" y="29" width="1" height="1" fill="#887624"/><rect x="846" y="30" width="1" height="1" fill="#9a8b40"/><rect x="847" y="29" width="1" height="1" fill="#948436"/><rect x="847" y="30" width="1" height="1" fill="#9a8b40"/><rect x="848" y="29" width="1" height="1" fill="#887624"/><rect x="848" y="30" width="1" height="1" fill="#9a8b40"/><rect x="849" y="29" width="1" height="1" fill="#948436"/><rect x="849" y="30" width="1" height="1" fill="#9a8b40"/><rect x="850" y="29" width="1" height="1" fill="#887624"/><rect x="850" y="30" width="1" height="1" fill="#9a8b40"/><rect x="820" y="31" width="1" height="1" fill="#694d67"/><rect x="820" y="32" width="1" height="1" fill="#7c5879"/><rect x="821" y="31" width="1" height="1" fill="#443542"/><rect x="821" y="32" width="1" height="1" fill="#7c5879"/><rect x="822" y="31" width="1" height="1" fill="#443542"/><rect x="822" y="32" width="1" height="1" fill="#7c5879"/><rect x="823" y="31" width="1" height="1" fill="#443542"/><rect x="823" y="32" width="1" height="1" fill="#7c5879"/><rect x="825" y="31" width="1" height="1" fill="#29443f"/><rect x="825" y="32" width="1" height="1" fill="#397e70"/><rect x="826" y="31" width="1" height="1" fill="#29443f"/><rect x="826" y="32" width="1" height="1" fill="#397e70"/><rect x="827" y="31" width="1" height="1" fill="#346b60"/><rect x="827" y="32" width="1" height="1" fill="#397e70"/><rect x="828" y="31" width="1" height="1" fill="#346b60"/><rect x="828" y="32" width="1" height="1" fill="#397e70"/><rect x="829" y="31" width="1" height="1" fill="#346b60"/><rect x="829" y="32" width="1" height="1" fill="#397e70"/><rect x="831" y="31" width="1" height="1" fill="#503d4f"/><rect x="831" y="32" width="1" height="1" fill="#694d67"/><rect x="832" y="31" width="1" height="1" fill="#443542"/><rect x="832" y="32" width="1" height="1" fill="#7c5879"/><rect x="833" y="31" width="1" height="1" fill="#443542"/><rect x="833" y="32" width="1" height="1" fill="#7c5879"/><rect x="834" y="31" width="1" height="1" fill="#443542"/><rect x="834" y="32" width="1" height="1" fill="#7c5879"/><rect x="835" y="31" width="1" height="1" fill="#443542"/><rect x="835" y="32" width="1" height="1" fill="#7c5879"/><rect x="836" y="31" width="1" height="1" fill="#694d67"/><rect x="836" y="32" width="1" height="1" fill="#7c5879"/><rect x="838" y="31" width="1" height="1" fill="#253532"/><rect x="838" y="32" width="1" height="1" fill="#2e5850"/><rect x="839" y="31" width="1" height="1" fill="#273d38"/><rect x="839" y="32" width="1" height="1" fill="#2b4c46"/><rect x="840" y="31" width="1" height="1" fill="#253532"/><rect x="840" y="32" width="1" height="1" fill="#2e5850"/><rect x="841" y="31" width="1" height="1" fill="#253532"/><rect x="841" y="32" width="1" height="1" fill="#2e5850"/><rect x="842" y="31" width="1" height="1" fill="#253532"/><rect x="842" y="32" width="1" height="1" fill="#2e5850"/><rect x="820" y="33" width="1" height="1" fill="#694d67"/><rect x="820" y="34" width="1" height="1" fill="#7c5879"/><rect x="821" y="33" width="1" height="1" fill="#443542"/><rect x="821" y="34" width="1" height="1" fill="#7c5879"/><rect x="822" y="33" width="1" height="1" fill="#443542"/><rect x="822" y="34" width="1" height="1" fill="#7c5879"/><rect x="823" y="33" width="1" height="1" fill="#443542"/><rect x="823" y="34" width="1" height="1" fill="#7c5879"/><rect x="825" y="33" width="1" height="1" fill="#29443f"/><rect x="825" y="34" width="1" height="1" fill="#397e70"/><rect x="826" y="33" width="1" height="1" fill="#29443f"/><rect x="826" y="34" width="1" height="1" fill="#397e70"/><rect x="827" y="33" width="1" height="1" fill="#346b60"/><rect x="827" y="34" width="1" height="1" fill="#397e70"/><rect x="828" y="33" width="1" height="1" fill="#346b60"/><rect x="828" y="34" width="1" height="1" fill="#397e70"/><rect x="829" y="33" width="1" height="1" fill="#346b60"/><rect x="829" y="34" width="1" height="1" fill="#397e70"/><rect x="831" y="33" width="1" height="1" fill="#503d4f"/><rect x="831" y="34" width="1" height="1" fill="#694d67"/><rect x="832" y="33" width="1" height="1" fill="#443542"/><rect x="832" y="34" width="1" height="1" fill="#7c5879"/><rect x="833" y="33" width="1" height="1" fill="#443542"/><rect x="833" y="34" width="1" height="1" fill="#7c5879"/><rect x="834" y="33" width="1" height="1" fill="#443542"/><rect x="834" y="34" width="1" height="1" fill="#7c5879"/><rect x="835" y="33" width="1" height="1" fill="#443542"/><rect x="835" y="34" width="1" height="1" fill="#7c5879"/><rect x="836" y="33" width="1" height="1" fill="#694d67"/><rect x="836" y="34" width="1" height="1" fill="#7c5879"/><rect x="838" y="33" width="1" height="1" fill="#253532"/><rect x="838" y="34" width="1" height="1" fill="#2e5850"/><rect x="839" y="33" width="1" height="1" fill="#253532"/><rect x="839" y="34" width="1" height="1" fill="#2e5850"/><rect x="840" y="33" width="1" height="1" fill="#2b4c46"/><rect x="840" y="34" width="1" height="1" fill="#2e5850"/><rect x="841" y="33" width="1" height="1" fill="#253532"/><rect x="841" y="34" width="1" height="1" fill="#2e5850"/><rect x="820" y="35" width="1" height="1" fill="#694d67"/><rect x="820" y="36" width="1" height="1" fill="#7c5879"/><rect x="821" y="35" width="1" height="1" fill="#443542"/><rect x="821" y="36" width="1" height="1" fill="#7c5879"/><rect x="822" y="35" width="1" height="1" fill="#443542"/><rect x="822" y="36" width="1" height="1" fill="#7c5879"/><rect x="823" y="35" width="1" height="1" fill="#443542"/><rect x="823" y="36" width="1" height="1" fill="#7c5879"/><rect x="825" y="35" width="1" height="1" fill="#29443f"/><rect x="825" y="36" width="1" height="1" fill="#397e70"/><rect x="826" y="35" width="1" height="1" fill="#29443f"/><rect x="826" y="36" width="1" height="1" fill="#397e70"/><rect x="827" y="35" width="1" height="1" fill="#29443f"/><rect x="827" y="36" width="1" height="1" fill="#397e70"/><rect x="828" y="35" width="1" height="1" fill="#29443f"/><rect x="828" y="36" width="1" height="1" fill="#397e70"/><rect x="829" y="35" width="1" height="1" fill="#29443f"/><rect x="829" y="36" width="1" height="1" fill="#397e70"/><rect x="830" y="35" width="1" height="1" fill="#29443f"/><rect x="830" y="36" width="1" height="1" fill="#397e70"/><rect x="831" y="35" width="1" height="1" fill="#29443f"/><rect x="831" y="36" width="1" height="1" fill="#397e70"/><rect x="833" y="35" width="1" height="1" fill="#503d4f"/><rect x="833" y="36" width="1" height="1" fill="#694d67"/><rect x="834" y="35" width="1" height="1" fill="#443542"/><rect x="834" y="36" width="1" height="1" fill="#7c5879"/><rect x="835" y="35" width="1" height="1" fill="#443542"/><rect x="835" y="36" width="1" height="1" fill="#7c5879"/><rect x="836" y="35" width="1" height="1" fill="#443542"/><rect x="836" y="36" width="1" height="1" fill="#7c5879"/><rect x="837" y="35" width="1" height="1" fill="#443542"/><rect x="837" y="36" width="1" height="1" fill="#7c5879"/><rect x="838" y="35" width="1" height="1" fill="#694d67"/><rect x="838" y="36" width="1" height="1" fill="#7c5879"/><rect x="840" y="35" width="1" height="1" fill="#253532"/><rect x="840" y="36" width="1" height="1" fill="#2e5850"/><rect x="841" y="35" width="1" height="1" fill="#253532"/><rect x="841" y="36" width="1" height="1" fill="#2e5850"/><rect x="842" y="35" width="1" height="1" fill="#2b4c46"/><rect x="842" y="36" width="1" height="1" fill="#2e5850"/><rect x="843" y="35" width="1" height="1" fill="#253532"/><rect x="843" y="36" width="1" height="1" fill="#2e5850"/><rect x="820" y="37" width="1" height="1" fill="#694d67"/><rect x="820" y="38" width="1" height="1" fill="#7c5879"/><rect x="821" y="37" width="1" height="1" fill="#443542"/><rect x="821" y="38" width="1" height="1" fill="#7c5879"/><rect x="822" y="37" width="1" height="1" fill="#443542"/><rect x="822" y="38" width="1" height="1" fill="#7c5879"/><rect x="823" y="37" width="1" height="1" fill="#443542"/><rect x="823" y="38" width="1" height="1" fill="#7c5879"/><rect x="825" y="37" width="1" height="1" fill="#29443f"/><rect x="825" y="38" width="1" height="1" fill="#397e70"/><rect x="826" y="37" width="1" height="1" fill="#29443f"/><rect x="826" y="38" width="1" height="1" fill="#397e70"/><rect x="827" y="37" width="1" height="1" fill="#346b60"/><rect x="827" y="38" width="1" height="1" fill="#397e70"/><rect x="828" y="37" width="1" height="1" fill="#2c514a"/><rect x="828" y="38" width="1" height="1" fill="#346b60"/><rect x="829" y="37" width="1" height="1" fill="#2c514a"/><rect x="829" y="38" width="1" height="1" fill="#346b60"/><rect x="830" y="37" width="1" height="1" fill="#2c514a"/><rect x="830" y="38" width="1" height="1" fill="#346b60"/><rect x="831" y="37" width="1" height="1" fill="#346b60"/><rect x="831" y="38" width="1" height="1" fill="#397e70"/><rect x="832" y="37" width="1" height="1" fill="#29443f"/><rect x="832" y="38" width="1" height="1" fill="#397e70"/><rect x="834" y="37" width="1" height="1" fill="#503d4f"/><rect x="834" y="38" width="1" height="1" fill="#694d67"/><rect x="835" y="37" width="1" height="1" fill="#443542"/><rect x="835" y="38" width="1" height="1" fill="#7c5879"/><rect x="836" y="37" width="1" height="1" fill="#443542"/><rect x="836" y="38" width="1" height="1" fill="#7c5879"/><rect x="837" y="37" width="1" height="1" fill="#443542"/><rect x="837" y="38" width="1" height="1" fill="#7c5879"/><rect x="838" y="37" width="1" height="1" fill="#443542"/><rect x="838" y="38" width="1" height="1" fill="#7c5879"/><rect x="839" y="37" width="1" height="1" fill="#694d67"/><rect x="839" y="38" width="1" height="1" fill="#7c5879"/><rect x="841" y="37" width="1" height="1" fill="#253532"/><rect x="841" y="38" width="1" height="1" fill="#2e5850"/><rect x="842" y="37" width="1" height="1" fill="#253532"/><rect x="842" y="38" width="1" height="1" fill="#2e5850"/><rect x="843" y="37" width="1" height="1" fill="#2b4c46"/><rect x="843" y="38" width="1" height="1" fill="#2e5850"/><rect x="844" y="37" width="1" height="1" fill="#253532"/><rect x="844" y="38" width="1" height="1" fill="#2e5850"/><rect x="820" y="39" width="1" height="1" fill="#503d4f"/><rect x="820" y="40" width="1" height="1" fill="#694d67"/><rect x="821" y="39" width="1" height="1" fill="#443542"/><rect x="821" y="40" width="1" height="1" fill="#7c5879"/><rect x="822" y="39" width="1" height="1" fill="#443542"/><rect x="822" y="40" width="1" height="1" fill="#7c5879"/><rect x="823" y="39" width="1" height="1" fill="#443542"/><rect x="823" y="40" width="1" height="1" fill="#7c5879"/><rect x="824" y="39" width="1" height="1" fill="#443542"/><rect x="824" y="40" width="1" height="1" fill="#7c5879"/><rect x="825" y="39" width="1" height="1" fill="#694d67"/><rect x="825" y="40" width="1" height="1" fill="#7c5879"/><rect x="827" y="39" width="1" height="1" fill="#29443f"/><rect x="827" y="40" width="1" height="1" fill="#397e70"/><rect x="828" y="39" width="1" height="1" fill="#29443f"/><rect x="828" y="40" width="1" height="1" fill="#397e70"/><rect x="829" y="39" width="1" height="1" fill="#346b60"/><rect x="829" y="40" width="1" height="1" fill="#397e70"/><rect x="830" y="39" width="1" height="1" fill="#346b60"/><rect x="830" y="40" width="1" height="1" fill="#397e70"/><rect x="831" y="39" width="1" height="1" fill="#346b60"/><rect x="831" y="40" width="1" height="1" fill="#397e70"/><rect x="820" y="41" width="1" height="1" fill="#503d4f"/><rect x="820" y="42" width="1" height="1" fill="#694d67"/><rect x="821" y="41" width="1" height="1" fill="#443542"/><rect x="821" y="42" width="1" height="1" fill="#7c5879"/><rect x="822" y="41" width="1" height="1" fill="#443542"/><rect x="822" y="42" width="1" height="1" fill="#7c5879"/><rect x="823" y="41" width="1" height="1" fill="#443542"/><rect x="823" y="42" width="1" height="1" fill="#7c5879"/><rect x="824" y="41" width="1" height="1" fill="#443542"/><rect x="824" y="42" width="1" height="1" fill="#7c5879"/><rect x="825" y="41" width="1" height="1" fill="#694d67"/><rect x="825" y="42" width="1" height="1" fill="#7c5879"/><rect x="827" y="41" width="1" height="1" fill="#29443f"/><rect x="827" y="42" width="1" height="1" fill="#397e70"/><rect x="828" y="41" width="1" height="1" fill="#29443f"/><rect x="828" y="42" width="1" height="1" fill="#397e70"/><rect x="829" y="41" width="1" height="1" fill="#29443f"/><rect x="829" y="42" width="1" height="1" fill="#397e70"/><rect x="830" y="41" width="1" height="1" fill="#29443f"/><rect x="830" y="42" width="1" height="1" fill="#397e70"/><rect x="831" y="41" width="1" height="1" fill="#29443f"/><rect x="831" y="42" width="1" height="1" fill="#397e70"/><rect x="832" y="41" width="1" height="1" fill="#29443f"/><rect x="832" y="42" width="1" height="1" fill="#397e70"/><rect x="833" y="41" width="1" height="1" fill="#29443f"/><rect x="833" y="42" width="1" height="1" fill="#397e70"/><rect x="820" y="43" width="1" height="1" fill="#503d4f"/><rect x="820" y="44" width="1" height="1" fill="#694d67"/><rect x="821" y="43" width="1" height="1" fill="#443542"/><rect x="821" y="44" width="1" height="1" fill="#7c5879"/><rect x="822" y="43" width="1" height="1" fill="#443542"/><rect x="822" y="44" width="1" height="1" fill="#7c5879"/><rect x="823" y="43" width="1" height="1" fill="#443542"/><rect x="823" y="44" width="1" height="1" fill="#7c5879"/><rect x="824" y="43" width="1" height="1" fill="#443542"/><rect x="824" y="44" width="1" height="1" fill="#7c5879"/><rect x="825" y="43" width="1" height="1" fill="#694d67"/><rect x="825" y="44" width="1" height="1" fill="#7c5879"/><rect x="827" y="43" width="1" height="1" fill="#29443f"/><rect x="827" y="44" width="1" height="1" fill="#397e70"/><rect x="828" y="43" width="1" height="1" fill="#29443f"/><rect x="828" y="44" width="1" height="1" fill="#397e70"/><rect x="829" y="43" width="1" height="1" fill="#346b60"/><rect x="829" y="44" width="1" height="1" fill="#397e70"/><rect x="830" y="43" width="1" height="1" fill="#2c514a"/><rect x="830" y="44" width="1" height="1" fill="#346b60"/><rect x="831" y="43" width="1" height="1" fill="#2c514a"/><rect x="831" y="44" width="1" height="1" fill="#346b60"/><rect x="832" y="43" width="1" height="1" fill="#2c514a"/><rect x="832" y="44" width="1" height="1" fill="#346b60"/><rect x="833" y="43" width="1" height="1" fill="#346b60"/><rect x="833" y="44" width="1" height="1" fill="#397e70"/><rect x="834" y="43" width="1" height="1" fill="#29443f"/><rect x="834" y="44" width="1" height="1" fill="#397e70"/><rect x="820" y="45" width="1" height="1" fill="#8e6f3c"/><rect x="820" y="46" width="1" height="1" fill="#937146"/><rect x="821" y="45" width="1" height="1" fill="#866c27"/><rect x="821" y="46" width="1" height="1" fill="#937146"/><rect x="822" y="45" width="1" height="1" fill="#866c27"/><rect x="822" y="46" width="1" height="1" fill="#937146"/><rect x="823" y="45" width="1" height="1" fill="#866c27"/><rect x="823" y="46" width="1" height="1" fill="#937146"/><rect x="851" y="45" width="1" height="1" fill="#896d2e"/><rect x="851" y="46" width="1" height="1" fill="#8e6f3c"/><rect x="852" y="45" width="1" height="1" fill="#866c27"/><rect x="852" y="46" width="1" height="1" fill="#937146"/><rect x="853" y="45" width="1" height="1" fill="#866c27"/><rect x="853" y="46" width="1" height="1" fill="#937146"/><rect x="854" y="45" width="1" height="1" fill="#866c27"/><rect x="854" y="46" width="1" height="1" fill="#937146"/><rect x="855" y="45" width="1" height="1" fill="#866c27"/><rect x="855" y="46" width="1" height="1" fill="#937146"/><rect x="856" y="45" width="1" height="1" fill="#8e6f3c"/><rect x="856" y="46" width="1" height="1" fill="#937146"/><rect x="858" y="45" width="1" height="1" fill="#6d6f2a"/><rect x="858" y="46" width="1" height="1" fill="#697130"/><rect x="859" y="45" width="1" height="1" fill="#756b1e"/><rect x="859" y="46" width="1" height="1" fill="#697130"/><rect x="860" y="45" width="1" height="1" fill="#6d6f2a"/><rect x="860" y="46" width="1" height="1" fill="#697130"/><rect x="861" y="45" width="1" height="1" fill="#726d22"/><rect x="861" y="46" width="1" height="1" fill="#6d6f2a"/><rect x="862" y="45" width="1" height="1" fill="#756b1e"/><rect x="862" y="46" width="1" height="1" fill="#697130"/><rect x="863" y="45" width="1" height="1" fill="#756b1e"/><rect x="863" y="46" width="1" height="1" fill="#697130"/><rect x="864" y="45" width="1" height="1" fill="#756b1e"/><rect x="864" y="46" width="1" height="1" fill="#697130"/><rect x="865" y="45" width="1" height="1" fill="#6d6f2a"/><rect x="865" y="46" width="1" height="1" fill="#697130"/><rect x="866" y="45" width="1" height="1" fill="#6d6f2a"/><rect x="866" y="46" width="1" height="1" fill="#697130"/><rect x="867" y="45" width="1" height="1" fill="#726d22"/><rect x="867" y="46" width="1" height="1" fill="#6d6f2a"/><rect x="868" y="45" width="1" height="1" fill="#756b1e"/><rect x="868" y="46" width="1" height="1" fill="#697130"/><rect x="869" y="45" width="1" height="1" fill="#756b1e"/><rect x="869" y="46" width="1" height="1" fill="#697130"/><rect x="820" y="49" width="1" height="1" fill="#3a4950"/><rect x="820" y="50" width="1" height="1" fill="#65899c"/><rect x="821" y="49" width="1" height="1" fill="#3a4950"/><rect x="821" y="50" width="1" height="1" fill="#65899c"/><rect x="822" y="49" width="1" height="1" fill="#577383"/><rect x="822" y="50" width="1" height="1" fill="#65899c"/><rect x="823" y="49" width="1" height="1" fill="#3a4950"/><rect x="823" y="50" width="1" height="1" fill="#65899c"/><rect x="824" y="49" width="1" height="1" fill="#3a4950"/><rect x="824" y="50" width="1" height="1" fill="#65899c"/><rect x="825" y="49" width="1" height="1" fill="#577383"/><rect x="825" y="50" width="1" height="1" fill="#65899c"/><rect x="826" y="49" width="1" height="1" fill="#577383"/><rect x="826" y="50" width="1" height="1" fill="#65899c"/><rect x="827" y="49" width="1" height="1" fill="#3a4950"/><rect x="827" y="50" width="1" height="1" fill="#65899c"/><rect x="828" y="49" width="1" height="1" fill="#3a4950"/><rect x="828" y="50" width="1" height="1" fill="#65899c"/><rect x="829" y="49" width="1" height="1" fill="#3a4950"/><rect x="829" y="50" width="1" height="1" fill="#65899c"/><rect x="830" y="49" width="1" height="1" fill="#3a4950"/><rect x="830" y="50" width="1" height="1" fill="#65899c"/><rect x="832" y="49" width="1" height="1" fill="#555555"/><rect x="832" y="50" width="1" height="1" fill="#555555"/><rect x="834" y="49" width="1" height="1" fill="#626262"/><rect x="834" y="50" width="1" height="1" fill="#626262"/><rect x="824" y="51" width="1" height="1" fill="#49493d"/><rect x="824" y="52" width="1" height="1" fill="#89896d"/><rect x="825" y="51" width="1" height="1" fill="#49493d"/><rect x="825" y="52" width="1" height="1" fill="#89896d"/><rect x="826" y="51" width="1" height="1" fill="#73735d"/><rect x="826" y="52" width="1" height="1" fill="#89896d"/><rect x="827" y="51" width="1" height="1" fill="#73735d"/><rect x="827" y="52" width="1" height="1" fill="#89896d"/><rect x="828" y="51" width="1" height="1" fill="#626262"/><rect x="828" y="52" width="1" height="1" fill="#626262"/><rect x="829" y="51" width="1" height="1" fill="#604940"/><rect x="829" y="52" width="1" height="1" fill="#322b28"/><rect x="830" y="51" width="1" height="1" fill="#604940"/><rect x="830" y="52" width="1" height="1" fill="#322b28"/><rect x="831" y="51" width="1" height="1" fill="#2c2c2c"/><rect x="831" y="52" width="1" height="1" fill="#555555"/><rect x="832" y="51" width="1" height="1" fill="#575748"/><rect x="832" y="52" width="1" height="1" fill="#73735d"/><rect x="833" y="51" width="1" height="1" fill="#49493d"/><rect x="833" y="52" width="1" height="1" fill="#89896d"/><rect x="834" y="51" width="1" height="1" fill="#49493d"/><rect x="834" y="52" width="1" height="1" fill="#89896d"/><rect x="835" y="51" width="1" height="1" fill="#73735d"/><rect x="835" y="52" width="1" height="1" fill="#89896d"/><rect x="836" y="51" width="1" height="1" fill="#49493d"/><rect x="836" y="52" width="1" height="1" fill="#89896d"/><rect x="837" y="51" width="1" height="1" fill="#73735d"/><rect x="837" y="52" width="1" height="1" fill="#89896d"/><rect x="838" y="51" width="1" height="1" fill="#49493d"/><rect x="838" y="52" width="1" height="1" fill="#89896d"/><rect x="839" y="51" width="1" height="1" fill="#626262"/><rect x="839" y="52" width="1" height="1" fill="#626262"/><rect x="840" y="51" width="1" height="1" fill="#29443f"/><rect x="840" y="52" width="1" height="1" fill="#397e70"/><rect x="841" y="51" width="1" height="1" fill="#29443f"/><rect x="841" y="52" width="1" height="1" fill="#397e70"/><rect x="842" y="51" width="1" height="1" fill="#346b60"/><rect x="842" y="52" width="1" height="1" fill="#397e70"/><rect x="843" y="51" width="1" height="1" fill="#346b60"/><rect x="843" y="52" width="1" height="1" fill="#397e70"/><rect x="844" y="51" width="1" height="1" fill="#346b60"/><rect x="844" y="52" width="1" height="1" fill="#397e70"/><rect x="845" y="51" width="1" height="1" fill="#2c2c2c"/><rect x="845" y="52" width="1" height="1" fill="#555555"/><rect x="846" y="51" width="1" height="1" fill="#3a4950"/><rect x="846" y="52" width="1" height="1" fill="#65899c"/><rect x="847" y="51" width="1" height="1" fill="#3a4950"/><rect x="847" y="52" width="1" height="1" fill="#65899c"/><rect x="848" y="51" width="1" height="1" fill="#577383"/><rect x="848" y="52" width="1" height="1" fill="#65899c"/><rect x="849" y="51" width="1" height="1" fill="#3a4950"/><rect x="849" y="52" width="1" height="1" fill="#65899c"/><rect x="850" y="51" width="1" height="1" fill="#626262"/><rect x="850" y="52" width="1" height="1" fill="#626262"/><rect x="851" y="51" width="1" height="1" fill="#626262"/><rect x="851" y="52" width="1" height="1" fill="#626262"/><rect x="852" y="51" width="1" height="1" fill="#2c2c2c"/><rect x="852" y="52" width="1" height="1" fill="#555555"/><rect x="824" y="53" width="1" height="1" fill="#49493d"/><rect x="824" y="54" width="1" height="1" fill="#89896d"/><rect x="825" y="53" width="1" height="1" fill="#49493d"/><rect x="825" y="54" width="1" height="1" fill="#89896d"/><rect x="826" y="53" width="1" height="1" fill="#73735d"/><rect x="826" y="54" width="1" height="1" fill="#89896d"/><rect x="827" y="53" width="1" height="1" fill="#73735d"/><rect x="827" y="54" width="1" height="1" fill="#89896d"/><rect x="828" y="53" width="1" height="1" fill="#626262"/><rect x="828" y="54" width="1" height="1" fill="#626262"/><rect x="829" y="53" width="1" height="1" fill="#604940"/><rect x="829" y="54" width="1" height="1" fill="#322b28"/><rect x="830" y="53" width="1" height="1" fill="#463832"/><rect x="830" y="54" width="1" height="1" fill="#815f51"/><rect x="831" y="53" width="1" height="1" fill="#463832"/><rect x="831" y="54" width="1" height="1" fill="#815f51"/><rect x="832" y="53" width="1" height="1" fill="#463832"/><rect x="832" y="54" width="1" height="1" fill="#815f51"/><rect x="833" y="53" width="1" height="1" fill="#463832"/><rect x="833" y="54" width="1" height="1" fill="#815f51"/><rect x="834" y="53" width="1" height="1" fill="#463832"/><rect x="834" y="54" width="1" height="1" fill="#815f51"/><rect x="835" y="53" width="1" height="1" fill="#463832"/><rect x="835" y="54" width="1" height="1" fill="#815f51"/><rect x="836" y="53" width="1" height="1" fill="#59453c"/><rect x="836" y="54" width="1" height="1" fill="#59453c"/><rect x="837" y="53" width="1" height="1" fill="#604940"/><rect x="837" y="54" width="1" height="1" fill="#322b28"/><rect x="838" y="53" width="1" height="1" fill="#2c2c2c"/><rect x="838" y="54" width="1" height="1" fill="#555555"/><rect x="840" y="53" width="1" height="1" fill="#575748"/><rect x="840" y="54" width="1" height="1" fill="#73735d"/><rect x="841" y="53" width="1" height="1" fill="#49493d"/><rect x="841" y="54" width="1" height="1" fill="#89896d"/><rect x="842" y="53" width="1" height="1" fill="#49493d"/><rect x="842" y="54" width="1" height="1" fill="#89896d"/><rect x="843" y="53" width="1" height="1" fill="#73735d"/><rect x="843" y="54" width="1" height="1" fill="#89896d"/><rect x="844" y="53" width="1" height="1" fill="#49493d"/><rect x="844" y="54" width="1" height="1" fill="#89896d"/><rect x="845" y="53" width="1" height="1" fill="#73735d"/><rect x="845" y="54" width="1" height="1" fill="#89896d"/><rect x="846" y="53" width="1" height="1" fill="#49493d"/><rect x="846" y="54" width="1" height="1" fill="#89896d"/><rect x="847" y="53" width="1" height="1" fill="#626262"/><rect x="847" y="54" width="1" height="1" fill="#626262"/><rect x="848" y="53" width="1" height="1" fill="#29443f"/><rect x="848" y="54" width="1" height="1" fill="#397e70"/><rect x="849" y="53" width="1" height="1" fill="#29443f"/><rect x="849" y="54" width="1" height="1" fill="#397e70"/><rect x="850" y="53" width="1" height="1" fill="#29443f"/><rect x="850" y="54" width="1" height="1" fill="#397e70"/><rect x="851" y="53" width="1" height="1" fill="#29443f"/><rect x="851" y="54" width="1" height="1" fill="#397e70"/><rect x="852" y="53" width="1" height="1" fill="#29443f"/><rect x="852" y="54" width="1" height="1" fill="#397e70"/><rect x="853" y="53" width="1" height="1" fill="#29443f"/><rect x="853" y="54" width="1" height="1" fill="#397e70"/><rect x="854" y="53" width="1" height="1" fill="#29443f"/><rect x="854" y="54" width="1" height="1" fill="#397e70"/><rect x="855" y="53" width="1" height="1" fill="#2c2c2c"/><rect x="855" y="54" width="1" height="1" fill="#555555"/><rect x="856" y="53" width="1" height="1" fill="#3a4950"/><rect x="856" y="54" width="1" height="1" fill="#65899c"/><rect x="857" y="53" width="1" height="1" fill="#3a4950"/><rect x="857" y="54" width="1" height="1" fill="#65899c"/><rect x="858" y="53" width="1" height="1" fill="#577383"/><rect x="858" y="54" width="1" height="1" fill="#65899c"/><rect x="859" y="53" width="1" height="1" fill="#3a4950"/><rect x="859" y="54" width="1" height="1" fill="#65899c"/><rect x="860" y="53" width="1" height="1" fill="#626262"/><rect x="860" y="54" width="1" height="1" fill="#626262"/><rect x="861" y="53" width="1" height="1" fill="#626262"/><rect x="861" y="54" width="1" height="1" fill="#626262"/><rect x="862" y="53" width="1" height="1" fill="#2c2c2c"/><rect x="862" y="54" width="1" height="1" fill="#555555"/><rect x="824" y="55" width="1" height="1" fill="#49493d"/><rect x="824" y="56" width="1" height="1" fill="#89896d"/><rect x="825" y="55" width="1" height="1" fill="#49493d"/><rect x="825" y="56" width="1" height="1" fill="#89896d"/><rect x="826" y="55" width="1" height="1" fill="#73735d"/><rect x="826" y="56" width="1" height="1" fill="#89896d"/><rect x="827" y="55" width="1" height="1" fill="#73735d"/><rect x="827" y="56" width="1" height="1" fill="#89896d"/><rect x="828" y="55" width="1" height="1" fill="#626262"/><rect x="828" y="56" width="1" height="1" fill="#626262"/><rect x="829" y="55" width="1" height="1" fill="#604940"/><rect x="829" y="56" width="1" height="1" fill="#322b28"/><rect x="830" y="55" width="1" height="1" fill="#463832"/><rect x="830" y="56" width="1" height="1" fill="#815f51"/><rect x="831" y="55" width="1" height="1" fill="#6d5246"/><rect x="831" y="56" width="1" height="1" fill="#815f51"/><rect x="832" y="55" width="1" height="1" fill="#463832"/><rect x="832" y="56" width="1" height="1" fill="#815f51"/><rect x="833" y="55" width="1" height="1" fill="#534039"/><rect x="833" y="56" width="1" height="1" fill="#6d5246"/><rect x="834" y="55" width="1" height="1" fill="#463832"/><rect x="834" y="56" width="1" height="1" fill="#815f51"/><rect x="835" y="55" width="1" height="1" fill="#59453c"/><rect x="835" y="56" width="1" height="1" fill="#59453c"/><rect x="836" y="55" width="1" height="1" fill="#604940"/><rect x="836" y="56" width="1" height="1" fill="#322b28"/><rect x="837" y="55" width="1" height="1" fill="#2c2c2c"/><rect x="837" y="56" width="1" height="1" fill="#555555"/><rect x="839" y="55" width="1" height="1" fill="#29443f"/><rect x="839" y="56" width="1" height="1" fill="#397e70"/><rect x="840" y="55" width="1" height="1" fill="#346b60"/><rect x="840" y="56" width="1" height="1" fill="#397e70"/><rect x="841" y="55" width="1" height="1" fill="#29443f"/><rect x="841" y="56" width="1" height="1" fill="#397e70"/><rect x="842" y="55" width="1" height="1" fill="#2c514a"/><rect x="842" y="56" width="1" height="1" fill="#346b60"/><rect x="843" y="55" width="1" height="1" fill="#29443f"/><rect x="843" y="56" width="1" height="1" fill="#397e70"/><rect x="844" y="55" width="1" height="1" fill="#2c2c2c"/><rect x="844" y="56" width="1" height="1" fill="#555555"/><rect x="845" y="55" width="1" height="1" fill="#3a4950"/><rect x="845" y="56" width="1" height="1" fill="#65899c"/><rect x="846" y="55" width="1" height="1" fill="#445761"/><rect x="846" y="56" width="1" height="1" fill="#577383"/><rect x="847" y="55" width="1" height="1" fill="#577383"/><rect x="847" y="56" width="1" height="1" fill="#65899c"/><rect x="848" y="55" width="1" height="1" fill="#3a4950"/><rect x="848" y="56" width="1" height="1" fill="#65899c"/><rect x="849" y="55" width="1" height="1" fill="#2c2c2c"/><rect x="849" y="56" width="1" height="1" fill="#555555"/><rect x="850" y="55" width="1" height="1" fill="#3a4950"/><rect x="850" y="56" width="1" height="1" fill="#65899c"/><rect x="851" y="55" width="1" height="1" fill="#3a4950"/><rect x="851" y="56" width="1" height="1" fill="#65899c"/><rect x="852" y="55" width="1" height="1" fill="#577383"/><rect x="852" y="56" width="1" height="1" fill="#65899c"/><rect x="853" y="55" width="1" height="1" fill="#3a4950"/><rect x="853" y="56" width="1" height="1" fill="#65899c"/><rect x="854" y="55" width="1" height="1" fill="#626262"/><rect x="854" y="56" width="1" height="1" fill="#626262"/><rect x="855" y="55" width="1" height="1" fill="#2c2c2c"/><rect x="855" y="56" width="1" height="1" fill="#555555"/><rect x="824" y="57" width="1" height="1" fill="#49493d"/><rect x="824" y="58" width="1" height="1" fill="#89896d"/><rect x="825" y="57" width="1" height="1" fill="#49493d"/><rect x="825" y="58" width="1" height="1" fill="#89896d"/><rect x="826" y="57" width="1" height="1" fill="#73735d"/><rect x="826" y="58" width="1" height="1" fill="#89896d"/><rect x="827" y="57" width="1" height="1" fill="#73735d"/><rect x="827" y="58" width="1" height="1" fill="#89896d"/><rect x="828" y="57" width="1" height="1" fill="#626262"/><rect x="828" y="58" width="1" height="1" fill="#626262"/><rect x="829" y="57" width="1" height="1" fill="#604940"/><rect x="829" y="58" width="1" height="1" fill="#322b28"/><rect x="830" y="57" width="1" height="1" fill="#463832"/><rect x="830" y="58" width="1" height="1" fill="#815f51"/><rect x="831" y="57" width="1" height="1" fill="#463832"/><rect x="831" y="58" width="1" height="1" fill="#815f51"/><rect x="832" y="57" width="1" height="1" fill="#6d5246"/><rect x="832" y="58" width="1" height="1" fill="#815f51"/><rect x="833" y="57" width="1" height="1" fill="#6d5246"/><rect x="833" y="58" width="1" height="1" fill="#815f51"/><rect x="834" y="57" width="1" height="1" fill="#6d5246"/><rect x="834" y="58" width="1" height="1" fill="#815f51"/><rect x="835" y="57" width="1" height="1" fill="#59453c"/><rect x="835" y="58" width="1" height="1" fill="#59453c"/><rect x="836" y="57" width="1" height="1" fill="#604940"/><rect x="836" y="58" width="1" height="1" fill="#322b28"/><rect x="837" y="57" width="1" height="1" fill="#2c2c2c"/><rect x="837" y="58" width="1" height="1" fill="#555555"/><rect x="839" y="57" width="1" height="1" fill="#575748"/><rect x="839" y="58" width="1" height="1" fill="#73735d"/><rect x="840" y="57" width="1" height="1" fill="#49493d"/><rect x="840" y="58" width="1" height="1" fill="#89896d"/><rect x="841" y="57" width="1" height="1" fill="#49493d"/><rect x="841" y="58" width="1" height="1" fill="#89896d"/><rect x="842" y="57" width="1" height="1" fill="#73735d"/><rect x="842" y="58" width="1" height="1" fill="#89896d"/><rect x="843" y="57" width="1" height="1" fill="#49493d"/><rect x="843" y="58" width="1" height="1" fill="#89896d"/><rect x="844" y="57" width="1" height="1" fill="#73735d"/><rect x="844" y="58" width="1" height="1" fill="#89896d"/><rect x="845" y="57" width="1" height="1" fill="#49493d"/><rect x="845" y="58" width="1" height="1" fill="#89896d"/><rect x="846" y="57" width="1" height="1" fill="#626262"/><rect x="846" y="58" width="1" height="1" fill="#626262"/><rect x="847" y="57" width="1" height="1" fill="#29443f"/><rect x="847" y="58" width="1" height="1" fill="#397e70"/><rect x="848" y="57" width="1" height="1" fill="#29443f"/><rect x="848" y="58" width="1" height="1" fill="#397e70"/><rect x="849" y="57" width="1" height="1" fill="#346b60"/><rect x="849" y="58" width="1" height="1" fill="#397e70"/><rect x="850" y="57" width="1" height="1" fill="#346b60"/><rect x="850" y="58" width="1" height="1" fill="#397e70"/><rect x="851" y="57" width="1" height="1" fill="#346b60"/><rect x="851" y="58" width="1" height="1" fill="#397e70"/><rect x="852" y="57" width="1" height="1" fill="#2c2c2c"/><rect x="852" y="58" width="1" height="1" fill="#555555"/><rect x="853" y="57" width="1" height="1" fill="#3a4950"/><rect x="853" y="58" width="1" height="1" fill="#65899c"/><rect x="854" y="57" width="1" height="1" fill="#3a4950"/><rect x="854" y="58" width="1" height="1" fill="#65899c"/><rect x="855" y="57" width="1" height="1" fill="#577383"/><rect x="855" y="58" width="1" height="1" fill="#65899c"/><rect x="856" y="57" width="1" height="1" fill="#3a4950"/><rect x="856" y="58" width="1" height="1" fill="#65899c"/><rect x="857" y="57" width="1" height="1" fill="#2c2c2c"/><rect x="857" y="58" width="1" height="1" fill="#555555"/><rect x="858" y="57" width="1" height="1" fill="#626262"/><rect x="858" y="58" width="1" height="1" fill="#626262"/><rect x="859" y="57" width="1" height="1" fill="#2c2c2c"/><rect x="859" y="58" width="1" height="1" fill="#555555"/><rect x="860" y="57" width="1" height="1" fill="#3a4950"/><rect x="860" y="58" width="1" height="1" fill="#65899c"/><rect x="861" y="57" width="1" height="1" fill="#3a4950"/><rect x="861" y="58" width="1" height="1" fill="#65899c"/><rect x="862" y="57" width="1" height="1" fill="#3a4950"/><rect x="862" y="58" width="1" height="1" fill="#65899c"/><rect x="863" y="57" width="1" height="1" fill="#3a4950"/><rect x="863" y="58" width="1" height="1" fill="#65899c"/><rect x="864" y="57" width="1" height="1" fill="#555555"/><rect x="864" y="58" width="1" height="1" fill="#555555"/><rect x="865" y="57" width="1" height="1" fill="#604940"/><rect x="865" y="58" width="1" height="1" fill="#322b28"/><rect x="866" y="57" width="1" height="1" fill="#463832"/><rect x="866" y="58" width="1" height="1" fill="#815f51"/><rect x="867" y="57" width="1" height="1" fill="#463832"/><rect x="867" y="58" width="1" height="1" fill="#815f51"/><rect x="868" y="57" width="1" height="1" fill="#604940"/><rect x="868" y="58" width="1" height="1" fill="#322b28"/><rect x="869" y="57" width="1" height="1" fill="#626262"/><rect x="869" y="58" width="1" height="1" fill="#626262"/><rect x="870" y="57" width="1" height="1" fill="#2c2c2c"/><rect x="870" y="58" width="1" height="1" fill="#555555"/><rect x="824" y="59" width="1" height="1" fill="#3b6080"/><rect x="824" y="60" width="1" height="1" fill="#66818b"/><rect x="825" y="59" width="1" height="1" fill="#3b6080"/><rect x="825" y="60" width="1" height="1" fill="#66818b"/><rect x="826" y="59" width="1" height="1" fill="#587687"/><rect x="826" y="60" width="1" height="1" fill="#66818b"/><rect x="827" y="59" width="1" height="1" fill="#587687"/><rect x="827" y="60" width="1" height="1" fill="#66818b"/><rect x="828" y="59" width="1" height="1" fill="#4c6c8f"/><rect x="828" y="60" width="1" height="1" fill="#4c6c8f"/><rect x="829" y="59" width="1" height="1" fill="#4b5c78"/><rect x="829" y="60" width="1" height="1" fill="#2c4f78"/><rect x="830" y="59" width="1" height="1" fill="#395578"/><rect x="830" y="60" width="1" height="1" fill="#616578"/><rect x="831" y="59" width="1" height="1" fill="#395578"/><rect x="831" y="60" width="1" height="1" fill="#616578"/><rect x="832" y="59" width="1" height="1" fill="#395578"/><rect x="832" y="60" width="1" height="1" fill="#616578"/><rect x="833" y="59" width="1" height="1" fill="#395578"/><rect x="833" y="60" width="1" height="1" fill="#616578"/><rect x="834" y="59" width="1" height="1" fill="#395578"/><rect x="834" y="60" width="1" height="1" fill="#616578"/><rect x="835" y="59" width="1" height="1" fill="#395578"/><rect x="835" y="60" width="1" height="1" fill="#616578"/><rect x="836" y="59" width="1" height="1" fill="#395578"/><rect x="836" y="60" width="1" height="1" fill="#616578"/><rect x="837" y="59" width="1" height="1" fill="#465a78"/><rect x="837" y="60" width="1" height="1" fill="#465a78"/><rect x="838" y="59" width="1" height="1" fill="#4b5c78"/><rect x="838" y="60" width="1" height="1" fill="#2c4f78"/><rect x="839" y="59" width="1" height="1" fill="#28517d"/><rect x="839" y="60" width="1" height="1" fill="#43668a"/><rect x="841" y="59" width="1" height="1" fill="#456782"/><rect x="841" y="60" width="1" height="1" fill="#587687"/><rect x="842" y="59" width="1" height="1" fill="#3b6080"/><rect x="842" y="60" width="1" height="1" fill="#66818b"/><rect x="843" y="59" width="1" height="1" fill="#3b6080"/><rect x="843" y="60" width="1" height="1" fill="#66818b"/><rect x="844" y="59" width="1" height="1" fill="#587687"/><rect x="844" y="60" width="1" height="1" fill="#66818b"/><rect x="845" y="59" width="1" height="1" fill="#3b6080"/><rect x="845" y="60" width="1" height="1" fill="#66818b"/><rect x="846" y="59" width="1" height="1" fill="#587687"/><rect x="846" y="60" width="1" height="1" fill="#66818b"/><rect x="847" y="59" width="1" height="1" fill="#3b6080"/><rect x="847" y="60" width="1" height="1" fill="#66818b"/><rect x="848" y="59" width="1" height="1" fill="#4c6c8f"/><rect x="848" y="60" width="1" height="1" fill="#4c6c8f"/><rect x="849" y="59" width="1" height="1" fill="#265d80"/><rect x="849" y="60" width="1" height="1" fill="#317a8d"/><rect x="850" y="59" width="1" height="1" fill="#265d80"/><rect x="850" y="60" width="1" height="1" fill="#317a8d"/><rect x="851" y="59" width="1" height="1" fill="#265d80"/><rect x="851" y="60" width="1" height="1" fill="#317a8d"/><rect x="852" y="59" width="1" height="1" fill="#265d80"/><rect x="852" y="60" width="1" height="1" fill="#317a8d"/><rect x="853" y="59" width="1" height="1" fill="#265d80"/><rect x="853" y="60" width="1" height="1" fill="#317a8d"/><rect x="854" y="59" width="1" height="1" fill="#265d80"/><rect x="854" y="60" width="1" height="1" fill="#317a8d"/><rect x="855" y="59" width="1" height="1" fill="#265d80"/><rect x="855" y="60" width="1" height="1" fill="#317a8d"/><rect x="856" y="59" width="1" height="1" fill="#28517d"/><rect x="856" y="60" width="1" height="1" fill="#43668a"/><rect x="857" y="59" width="1" height="1" fill="#32608c"/><rect x="857" y="60" width="1" height="1" fill="#4e81aa"/><rect x="858" y="59" width="1" height="1" fill="#32608c"/><rect x="858" y="60" width="1" height="1" fill="#4e81aa"/><rect x="859" y="59" width="1" height="1" fill="#4476a0"/><rect x="859" y="60" width="1" height="1" fill="#4e81aa"/><rect x="860" y="59" width="1" height="1" fill="#32608c"/><rect x="860" y="60" width="1" height="1" fill="#4e81aa"/><rect x="861" y="59" width="1" height="1" fill="#28517d"/><rect x="861" y="60" width="1" height="1" fill="#43668a"/><rect x="862" y="59" width="1" height="1" fill="#4c6c8f"/><rect x="862" y="60" width="1" height="1" fill="#4c6c8f"/><rect x="863" y="59" width="1" height="1" fill="#28517d"/><rect x="863" y="60" width="1" height="1" fill="#43668a"/><rect x="864" y="59" width="1" height="1" fill="#32608c"/><rect x="864" y="60" width="1" height="1" fill="#4e81aa"/><rect x="865" y="59" width="1" height="1" fill="#32608c"/><rect x="865" y="60" width="1" height="1" fill="#4e81aa"/><rect x="866" y="59" width="1" height="1" fill="#32608c"/><rect x="866" y="60" width="1" height="1" fill="#4e81aa"/><rect x="867" y="59" width="1" height="1" fill="#32608c"/><rect x="867" y="60" width="1" height="1" fill="#4e81aa"/><rect x="868" y="59" width="1" height="1" fill="#43668a"/><rect x="868" y="60" width="1" height="1" fill="#43668a"/><rect x="869" y="59" width="1" height="1" fill="#4b5c78"/><rect x="869" y="60" width="1" height="1" fill="#2c4f78"/><rect x="870" y="59" width="1" height="1" fill="#395578"/><rect x="870" y="60" width="1" height="1" fill="#616578"/><rect x="871" y="59" width="1" height="1" fill="#395578"/><rect x="871" y="60" width="1" height="1" fill="#616578"/><rect x="872" y="59" width="1" height="1" fill="#395578"/><rect x="872" y="60" width="1" height="1" fill="#616578"/><rect x="873" y="59" width="1" height="1" fill="#4b5c78"/><rect x="873" y="60" width="1" height="1" fill="#2c4f78"/><rect x="874" y="59" width="1" height="1" fill="#4c6c8f"/><rect x="874" y="60" width="1" height="1" fill="#4c6c8f"/><rect x="875" y="59" width="1" height="1" fill="#28517d"/><rect x="875" y="60" width="1" height="1" fill="#43668a"/><rect x="824" y="61" width="1" height="1" fill="#49493d"/><rect x="824" y="62" width="1" height="1" fill="#89896d"/><rect x="825" y="61" width="1" height="1" fill="#49493d"/><rect x="825" y="62" width="1" height="1" fill="#89896d"/><rect x="826" y="61" width="1" height="1" fill="#73735d"/><rect x="826" y="62" width="1" height="1" fill="#89896d"/><rect x="827" y="61" width="1" height="1" fill="#73735d"/><rect x="827" y="62" width="1" height="1" fill="#89896d"/><rect x="828" y="61" width="1" height="1" fill="#626262"/><rect x="828" y="62" width="1" height="1" fill="#626262"/><rect x="829" y="61" width="1" height="1" fill="#604940"/><rect x="829" y="62" width="1" height="1" fill="#322b28"/><rect x="830" y="61" width="1" height="1" fill="#463832"/><rect x="830" y="62" width="1" height="1" fill="#815f51"/><rect x="831" y="61" width="1" height="1" fill="#463832"/><rect x="831" y="62" width="1" height="1" fill="#815f51"/><rect x="832" y="61" width="1" height="1" fill="#6d5246"/><rect x="832" y="62" width="1" height="1" fill="#815f51"/><rect x="833" y="61" width="1" height="1" fill="#463832"/><rect x="833" y="62" width="1" height="1" fill="#815f51"/><rect x="834" y="61" width="1" height="1" fill="#534039"/><rect x="834" y="62" width="1" height="1" fill="#6d5246"/><rect x="835" y="61" width="1" height="1" fill="#463832"/><rect x="835" y="62" width="1" height="1" fill="#815f51"/><rect x="836" y="61" width="1" height="1" fill="#59453c"/><rect x="836" y="62" width="1" height="1" fill="#59453c"/><rect x="837" y="61" width="1" height="1" fill="#604940"/><rect x="837" y="62" width="1" height="1" fill="#322b28"/><rect x="838" y="61" width="1" height="1" fill="#2c2c2c"/><rect x="838" y="62" width="1" height="1" fill="#555555"/><rect x="840" y="61" width="1" height="1" fill="#575748"/><rect x="840" y="62" width="1" height="1" fill="#73735d"/><rect x="841" y="61" width="1" height="1" fill="#49493d"/><rect x="841" y="62" width="1" height="1" fill="#89896d"/><rect x="842" y="61" width="1" height="1" fill="#49493d"/><rect x="842" y="62" width="1" height="1" fill="#89896d"/><rect x="843" y="61" width="1" height="1" fill="#73735d"/><rect x="843" y="62" width="1" height="1" fill="#89896d"/><rect x="844" y="61" width="1" height="1" fill="#49493d"/><rect x="844" y="62" width="1" height="1" fill="#89896d"/><rect x="845" y="61" width="1" height="1" fill="#73735d"/><rect x="845" y="62" width="1" height="1" fill="#89896d"/><rect x="846" y="61" width="1" height="1" fill="#49493d"/><rect x="846" y="62" width="1" height="1" fill="#89896d"/><rect x="847" y="61" width="1" height="1" fill="#626262"/><rect x="847" y="62" width="1" height="1" fill="#626262"/><rect x="848" y="61" width="1" height="1" fill="#29443f"/><rect x="848" y="62" width="1" height="1" fill="#397e70"/><rect x="849" y="61" width="1" height="1" fill="#29443f"/><rect x="849" y="62" width="1" height="1" fill="#397e70"/><rect x="850" y="61" width="1" height="1" fill="#346b60"/><rect x="850" y="62" width="1" height="1" fill="#397e70"/><rect x="851" y="61" width="1" height="1" fill="#2c514a"/><rect x="851" y="62" width="1" height="1" fill="#346b60"/><rect x="852" y="61" width="1" height="1" fill="#2c514a"/><rect x="852" y="62" width="1" height="1" fill="#346b60"/><rect x="853" y="61" width="1" height="1" fill="#2c514a"/><rect x="853" y="62" width="1" height="1" fill="#346b60"/><rect x="854" y="61" width="1" height="1" fill="#346b60"/><rect x="854" y="62" width="1" height="1" fill="#397e70"/><rect x="855" y="61" width="1" height="1" fill="#29443f"/><rect x="855" y="62" width="1" height="1" fill="#397e70"/><rect x="856" y="61" width="1" height="1" fill="#2c2c2c"/><rect x="856" y="62" width="1" height="1" fill="#555555"/><rect x="857" y="61" width="1" height="1" fill="#3a4950"/><rect x="857" y="62" width="1" height="1" fill="#65899c"/><rect x="858" y="61" width="1" height="1" fill="#3a4950"/><rect x="858" y="62" width="1" height="1" fill="#65899c"/><rect x="859" y="61" width="1" height="1" fill="#577383"/><rect x="859" y="62" width="1" height="1" fill="#65899c"/><rect x="860" y="61" width="1" height="1" fill="#3a4950"/><rect x="860" y="62" width="1" height="1" fill="#65899c"/><rect x="861" y="61" width="1" height="1" fill="#2c2c2c"/><rect x="861" y="62" width="1" height="1" fill="#555555"/><rect x="862" y="61" width="1" height="1" fill="#626262"/><rect x="862" y="62" width="1" height="1" fill="#626262"/><rect x="863" y="61" width="1" height="1" fill="#2c2c2c"/><rect x="863" y="62" width="1" height="1" fill="#555555"/><rect x="864" y="61" width="1" height="1" fill="#3a4950"/><rect x="864" y="62" width="1" height="1" fill="#65899c"/><rect x="865" y="61" width="1" height="1" fill="#3a4950"/><rect x="865" y="62" width="1" height="1" fill="#65899c"/><rect x="866" y="61" width="1" height="1" fill="#3a4950"/><rect x="866" y="62" width="1" height="1" fill="#65899c"/><rect x="867" y="61" width="1" height="1" fill="#3a4950"/><rect x="867" y="62" width="1" height="1" fill="#65899c"/><rect x="868" y="61" width="1" height="1" fill="#555555"/><rect x="868" y="62" width="1" height="1" fill="#555555"/><rect x="869" y="61" width="1" height="1" fill="#604940"/><rect x="869" y="62" width="1" height="1" fill="#322b28"/><rect x="870" y="61" width="1" height="1" fill="#463832"/><rect x="870" y="62" width="1" height="1" fill="#815f51"/><rect x="871" y="61" width="1" height="1" fill="#463832"/><rect x="871" y="62" width="1" height="1" fill="#815f51"/><rect x="872" y="61" width="1" height="1" fill="#463832"/><rect x="872" y="62" width="1" height="1" fill="#815f51"/><rect x="873" y="61" width="1" height="1" fill="#6d5246"/><rect x="873" y="62" width="1" height="1" fill="#815f51"/><rect x="874" y="61" width="1" height="1" fill="#604940"/><rect x="874" y="62" width="1" height="1" fill="#322b28"/><rect x="875" y="61" width="1" height="1" fill="#626262"/><rect x="875" y="62" width="1" height="1" fill="#626262"/><rect x="876" y="61" width="1" height="1" fill="#2c2c2c"/><rect x="876" y="62" width="1" height="1" fill="#555555"/><rect x="824" y="63" width="1" height="1" fill="#48623c"/><rect x="824" y="64" width="1" height="1" fill="#48623c"/><rect x="825" y="63" width="1" height="1" fill="#35432e"/><rect x="825" y="64" width="1" height="1" fill="#577a47"/><rect x="826" y="63" width="1" height="1" fill="#35432e"/><rect x="826" y="64" width="1" height="1" fill="#577a47"/><rect x="827" y="63" width="1" height="1" fill="#4c683f"/><rect x="827" y="64" width="1" height="1" fill="#577a47"/><rect x="828" y="63" width="1" height="1" fill="#4c683f"/><rect x="828" y="64" width="1" height="1" fill="#577a47"/><rect x="829" y="63" width="1" height="1" fill="#445c3a"/><rect x="829" y="64" width="1" height="1" fill="#445c3a"/><rect x="830" y="63" width="1" height="1" fill="#445c3a"/><rect x="830" y="64" width="1" height="1" fill="#293026"/><rect x="831" y="63" width="1" height="1" fill="#35432e"/><rect x="831" y="64" width="1" height="1" fill="#577a47"/><rect x="832" y="63" width="1" height="1" fill="#35432e"/><rect x="832" y="64" width="1" height="1" fill="#577a47"/><rect x="833" y="63" width="1" height="1" fill="#4c683f"/><rect x="833" y="64" width="1" height="1" fill="#577a47"/><rect x="834" y="63" width="1" height="1" fill="#4c683f"/><rect x="834" y="64" width="1" height="1" fill="#577a47"/><rect x="835" y="63" width="1" height="1" fill="#4c683f"/><rect x="835" y="64" width="1" height="1" fill="#577a47"/><rect x="836" y="63" width="1" height="1" fill="#405537"/><rect x="836" y="64" width="1" height="1" fill="#405537"/><rect x="837" y="63" width="1" height="1" fill="#445c3a"/><rect x="837" y="64" width="1" height="1" fill="#293026"/><rect x="838" y="63" width="1" height="1" fill="#262a24"/><rect x="838" y="64" width="1" height="1" fill="#3c4f34"/><rect x="840" y="63" width="1" height="1" fill="#3c4f34"/><rect x="840" y="64" width="1" height="1" fill="#4c683f"/><rect x="841" y="63" width="1" height="1" fill="#35432e"/><rect x="841" y="64" width="1" height="1" fill="#577a47"/><rect x="842" y="63" width="1" height="1" fill="#35432e"/><rect x="842" y="64" width="1" height="1" fill="#577a47"/><rect x="843" y="63" width="1" height="1" fill="#4c683f"/><rect x="843" y="64" width="1" height="1" fill="#577a47"/><rect x="844" y="63" width="1" height="1" fill="#35432e"/><rect x="844" y="64" width="1" height="1" fill="#577a47"/><rect x="845" y="63" width="1" height="1" fill="#4c683f"/><rect x="845" y="64" width="1" height="1" fill="#577a47"/><rect x="846" y="63" width="1" height="1" fill="#35432e"/><rect x="846" y="64" width="1" height="1" fill="#577a47"/><rect x="847" y="63" width="1" height="1" fill="#445c3a"/><rect x="847" y="64" width="1" height="1" fill="#445c3a"/><rect x="848" y="63" width="1" height="1" fill="#35432e"/><rect x="848" y="64" width="1" height="1" fill="#577a47"/><rect x="849" y="63" width="1" height="1" fill="#35432e"/><rect x="849" y="64" width="1" height="1" fill="#577a47"/><rect x="850" y="63" width="1" height="1" fill="#4c683f"/><rect x="850" y="64" width="1" height="1" fill="#577a47"/><rect x="851" y="63" width="1" height="1" fill="#4c683f"/><rect x="851" y="64" width="1" height="1" fill="#577a47"/><rect x="852" y="63" width="1" height="1" fill="#4c683f"/><rect x="852" y="64" width="1" height="1" fill="#577a47"/><rect x="853" y="63" width="1" height="1" fill="#262a24"/><rect x="853" y="64" width="1" height="1" fill="#3c4f34"/><rect x="854" y="63" width="1" height="1" fill="#35432e"/><rect x="854" y="64" width="1" height="1" fill="#577a47"/><rect x="855" y="63" width="1" height="1" fill="#35432e"/><rect x="855" y="64" width="1" height="1" fill="#577a47"/><rect x="856" y="63" width="1" height="1" fill="#4c683f"/><rect x="856" y="64" width="1" height="1" fill="#577a47"/><rect x="857" y="63" width="1" height="1" fill="#35432e"/><rect x="857" y="64" width="1" height="1" fill="#577a47"/><rect x="858" y="63" width="1" height="1" fill="#445c3a"/><rect x="858" y="64" width="1" height="1" fill="#445c3a"/><rect x="859" y="63" width="1" height="1" fill="#445c3a"/><rect x="859" y="64" width="1" height="1" fill="#445c3a"/><rect x="860" y="63" width="1" height="1" fill="#262a24"/><rect x="860" y="64" width="1" height="1" fill="#3c4f34"/><rect x="824" y="65" width="1" height="1" fill="#49493d"/><rect x="824" y="66" width="1" height="1" fill="#89896d"/><rect x="825" y="65" width="1" height="1" fill="#49493d"/><rect x="825" y="66" width="1" height="1" fill="#89896d"/><rect x="826" y="65" width="1" height="1" fill="#73735d"/><rect x="826" y="66" width="1" height="1" fill="#89896d"/><rect x="827" y="65" width="1" height="1" fill="#73735d"/><rect x="827" y="66" width="1" height="1" fill="#89896d"/><rect x="828" y="65" width="1" height="1" fill="#626262"/><rect x="828" y="66" width="1" height="1" fill="#626262"/><rect x="829" y="65" width="1" height="1" fill="#604940"/><rect x="829" y="66" width="1" height="1" fill="#322b28"/><rect x="830" y="65" width="1" height="1" fill="#604940"/><rect x="830" y="66" width="1" height="1" fill="#322b28"/><rect x="831" y="65" width="1" height="1" fill="#2c2c2c"/><rect x="831" y="66" width="1" height="1" fill="#555555"/><rect x="833" y="65" width="1" height="1" fill="#575748"/><rect x="833" y="66" width="1" height="1" fill="#73735d"/><rect x="834" y="65" width="1" height="1" fill="#49493d"/><rect x="834" y="66" width="1" height="1" fill="#89896d"/><rect x="835" y="65" width="1" height="1" fill="#49493d"/><rect x="835" y="66" width="1" height="1" fill="#89896d"/><rect x="836" y="65" width="1" height="1" fill="#73735d"/><rect x="836" y="66" width="1" height="1" fill="#89896d"/><rect x="837" y="65" width="1" height="1" fill="#49493d"/><rect x="837" y="66" width="1" height="1" fill="#89896d"/><rect x="838" y="65" width="1" height="1" fill="#73735d"/><rect x="838" y="66" width="1" height="1" fill="#89896d"/><rect x="839" y="65" width="1" height="1" fill="#49493d"/><rect x="839" y="66" width="1" height="1" fill="#89896d"/><rect x="840" y="65" width="1" height="1" fill="#626262"/><rect x="840" y="66" width="1" height="1" fill="#626262"/><rect x="841" y="65" width="1" height="1" fill="#29443f"/><rect x="841" y="66" width="1" height="1" fill="#397e70"/><rect x="842" y="65" width="1" height="1" fill="#29443f"/><rect x="842" y="66" width="1" height="1" fill="#397e70"/><rect x="843" y="65" width="1" height="1" fill="#346b60"/><rect x="843" y="66" width="1" height="1" fill="#397e70"/><rect x="844" y="65" width="1" height="1" fill="#346b60"/><rect x="844" y="66" width="1" height="1" fill="#397e70"/><rect x="845" y="65" width="1" height="1" fill="#346b60"/><rect x="845" y="66" width="1" height="1" fill="#397e70"/><rect x="846" y="65" width="1" height="1" fill="#2c2c2c"/><rect x="846" y="66" width="1" height="1" fill="#555555"/><rect x="847" y="65" width="1" height="1" fill="#3a4950"/><rect x="847" y="66" width="1" height="1" fill="#65899c"/><rect x="848" y="65" width="1" height="1" fill="#3a4950"/><rect x="848" y="66" width="1" height="1" fill="#65899c"/><rect x="849" y="65" width="1" height="1" fill="#577383"/><rect x="849" y="66" width="1" height="1" fill="#65899c"/><rect x="850" y="65" width="1" height="1" fill="#3a4950"/><rect x="850" y="66" width="1" height="1" fill="#65899c"/><rect x="851" y="65" width="1" height="1" fill="#626262"/><rect x="851" y="66" width="1" height="1" fill="#626262"/><rect x="852" y="65" width="1" height="1" fill="#626262"/><rect x="852" y="66" width="1" height="1" fill="#626262"/><rect x="853" y="65" width="1" height="1" fill="#2c2c2c"/><rect x="853" y="66" width="1" height="1" fill="#555555"/><rect x="824" y="73" width="1" height="1" fill="#48623c"/><rect x="824" y="74" width="1" height="1" fill="#48623c"/><rect x="825" y="73" width="1" height="1" fill="#35432e"/><rect x="825" y="74" width="1" height="1" fill="#577a47"/><rect x="826" y="73" width="1" height="1" fill="#35432e"/><rect x="826" y="74" width="1" height="1" fill="#577a47"/><rect x="827" y="73" width="1" height="1" fill="#4c683f"/><rect x="827" y="74" width="1" height="1" fill="#577a47"/><rect x="828" y="73" width="1" height="1" fill="#4c683f"/><rect x="828" y="74" width="1" height="1" fill="#577a47"/><rect x="829" y="73" width="1" height="1" fill="#445c3a"/><rect x="829" y="74" width="1" height="1" fill="#445c3a"/><rect x="830" y="73" width="1" height="1" fill="#445c3a"/><rect x="830" y="74" width="1" height="1" fill="#293026"/><rect x="831" y="73" width="1" height="1" fill="#35432e"/><rect x="831" y="74" width="1" height="1" fill="#577a47"/><rect x="832" y="73" width="1" height="1" fill="#35432e"/><rect x="832" y="74" width="1" height="1" fill="#577a47"/><rect x="833" y="73" width="1" height="1" fill="#35432e"/><rect x="833" y="74" width="1" height="1" fill="#577a47"/><rect x="834" y="73" width="1" height="1" fill="#35432e"/><rect x="834" y="74" width="1" height="1" fill="#577a47"/><rect x="835" y="73" width="1" height="1" fill="#35432e"/><rect x="835" y="74" width="1" height="1" fill="#577a47"/><rect x="836" y="73" width="1" height="1" fill="#35432e"/><rect x="836" y="74" width="1" height="1" fill="#577a47"/><rect x="837" y="73" width="1" height="1" fill="#405537"/><rect x="837" y="74" width="1" height="1" fill="#405537"/><rect x="838" y="73" width="1" height="1" fill="#445c3a"/><rect x="838" y="74" width="1" height="1" fill="#293026"/><rect x="839" y="73" width="1" height="1" fill="#262a24"/><rect x="839" y="74" width="1" height="1" fill="#3c4f34"/><rect x="841" y="73" width="1" height="1" fill="#3c4f34"/><rect x="841" y="74" width="1" height="1" fill="#4c683f"/><rect x="842" y="73" width="1" height="1" fill="#35432e"/><rect x="842" y="74" width="1" height="1" fill="#577a47"/><rect x="843" y="73" width="1" height="1" fill="#35432e"/><rect x="843" y="74" width="1" height="1" fill="#577a47"/><rect x="844" y="73" width="1" height="1" fill="#4c683f"/><rect x="844" y="74" width="1" height="1" fill="#577a47"/><rect x="845" y="73" width="1" height="1" fill="#35432e"/><rect x="845" y="74" width="1" height="1" fill="#577a47"/><rect x="846" y="73" width="1" height="1" fill="#4c683f"/><rect x="846" y="74" width="1" height="1" fill="#577a47"/><rect x="847" y="73" width="1" height="1" fill="#35432e"/><rect x="847" y="74" width="1" height="1" fill="#577a47"/><rect x="848" y="73" width="1" height="1" fill="#445c3a"/><rect x="848" y="74" width="1" height="1" fill="#445c3a"/><rect x="849" y="73" width="1" height="1" fill="#35432e"/><rect x="849" y="74" width="1" height="1" fill="#577a47"/><rect x="850" y="73" width="1" height="1" fill="#35432e"/><rect x="850" y="74" width="1" height="1" fill="#577a47"/><rect x="851" y="73" width="1" height="1" fill="#35432e"/><rect x="851" y="74" width="1" height="1" fill="#577a47"/><rect x="852" y="73" width="1" height="1" fill="#35432e"/><rect x="852" y="74" width="1" height="1" fill="#577a47"/><rect x="853" y="73" width="1" height="1" fill="#35432e"/><rect x="853" y="74" width="1" height="1" fill="#577a47"/><rect x="854" y="73" width="1" height="1" fill="#35432e"/><rect x="854" y="74" width="1" height="1" fill="#577a47"/><rect x="855" y="73" width="1" height="1" fill="#35432e"/><rect x="855" y="74" width="1" height="1" fill="#577a47"/><rect x="856" y="73" width="1" height="1" fill="#262a24"/><rect x="856" y="74" width="1" height="1" fill="#3c4f34"/><rect x="857" y="73" width="1" height="1" fill="#35432e"/><rect x="857" y="74" width="1" height="1" fill="#577a47"/><rect x="858" y="73" width="1" height="1" fill="#35432e"/><rect x="858" y="74" width="1" height="1" fill="#577a47"/><rect x="859" y="73" width="1" height="1" fill="#4c683f"/><rect x="859" y="74" width="1" height="1" fill="#577a47"/><rect x="860" y="73" width="1" height="1" fill="#35432e"/><rect x="860" y="74" width="1" height="1" fill="#577a47"/><rect x="861" y="73" width="1" height="1" fill="#445c3a"/><rect x="861" y="74" width="1" height="1" fill="#445c3a"/><rect x="862" y="73" width="1" height="1" fill="#445c3a"/><rect x="862" y="74" width="1" height="1" fill="#445c3a"/><rect x="863" y="73" width="1" height="1" fill="#262a24"/><rect x="863" y="74" width="1" height="1" fill="#3c4f34"/><rect x="820" y="75" width="1" height="1" fill="#626262"/><rect x="820" y="76" width="1" height="1" fill="#626262"/></svg>
<div id="vs"></div><div id="vst"></div>
<div style="position:absolute;left:891px;top:26px;width:2px;height:55px;background:#cca700"></div>
<div style="position:absolute;left:891px;top:145px;width:2px;height:10px;background:#cca700"></div>
<div style="position:absolute;left:882px;top:209px;width:11px;height:2px;background:#a0a0a0"></div>
<svg style="position:absolute;left:750px;top:545px;z-index:3" width="20" height="8"><path d="M0 4.5H5L9 8.5L13 4.5H20" stroke="#454545" fill="#252526"/></svg><div id="tip"><span>Выберите последовательность конца строки</span></div>
</body></html>
